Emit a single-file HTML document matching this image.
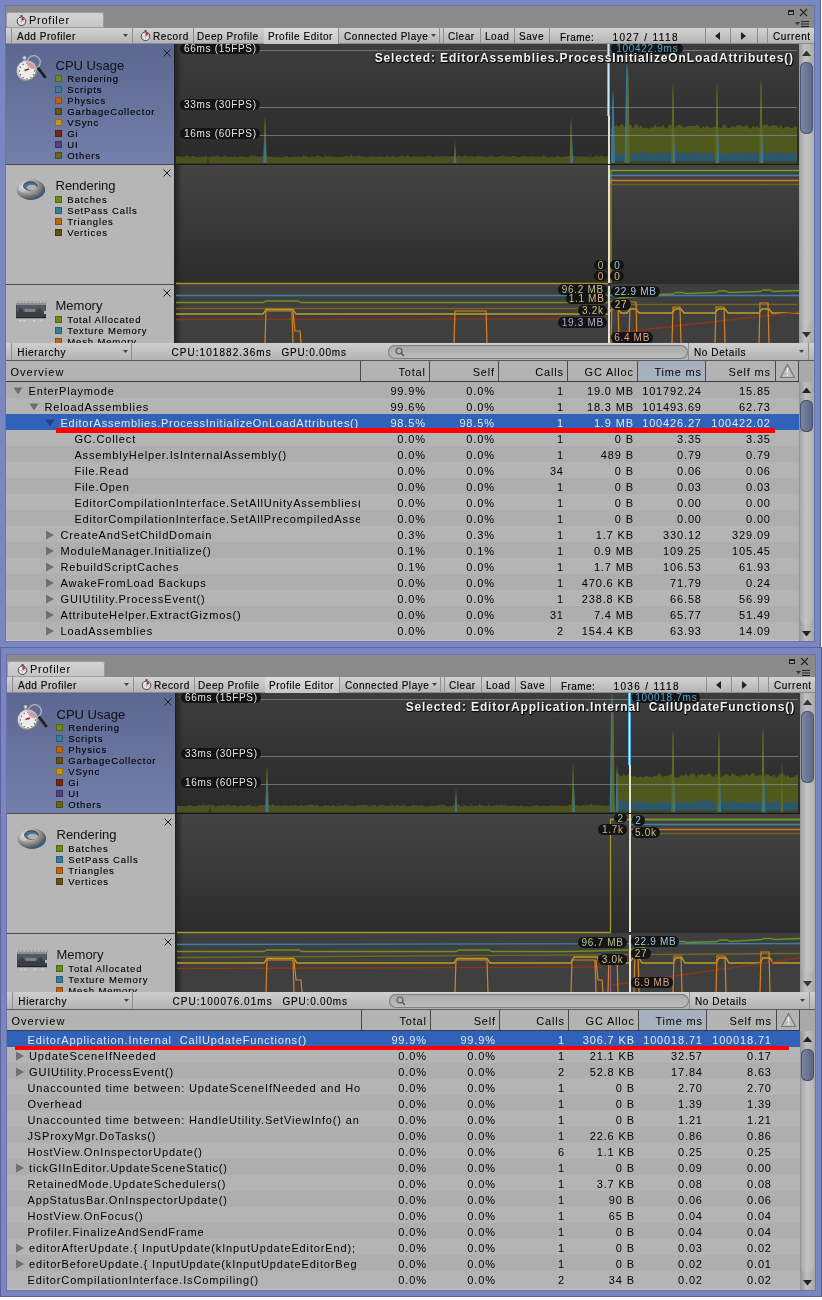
<!DOCTYPE html>
<html><head><meta charset="utf-8"><style>
html,body{margin:0;padding:0;width:822px;height:1300px;overflow:hidden;background:#fff;position:relative}
body div, body span, body svg{position:absolute}
svg *{position:static}
.t{font-family:"Liberation Sans", sans-serif;white-space:pre;line-height:20px;height:20px}
.pill{font-family:"Liberation Sans", sans-serif;font-size:10px;background:#141414;border-radius:6px;text-align:center;white-space:pre;letter-spacing:0.7px;text-indent:0.7px}
.sel{color:#f2f2f2;font-weight:bold;text-shadow:1px 1px 0 #000,0 1px 1px #000}
</style></head><body><div id="root" style="left:0;top:0;width:822px;height:1300px;overflow:hidden;background:#fff;will-change:transform">
<div style="left:0px;top:0px;width:821px;height:648px;background:#7986c2"></div>
<div style="left:820px;top:0px;width:1px;height:648px;background:#5b6497"></div>
<div style="left:0px;top:647px;width:822px;height:650px;background:#7986c2"></div>
<div style="left:0px;top:647px;width:822px;height:1px;background:#5b6497"></div>
<div style="left:0px;top:647px;width:1px;height:650px;background:#5b6497"></div>
<div style="left:821px;top:647px;width:1px;height:650px;background:#5b6497"></div>
<div style="left:0px;top:1296px;width:822px;height:1px;background:#5b6497"></div>
<div style="left:5px;top:5px;width:810px;height:637px;background:#6a74aa"></div>
<div style="left:6px;top:6px;width:808px;height:635px;background:#b4b4b4"></div>
<div style="left:6px;top:6px;width:808px;height:22px;background:#8a8a8a"></div>
<div style="left:6px;top:12px;width:98px;height:16px;background:linear-gradient(#d4d4d4,#c4c4c4);border-radius:3px 3px 0 0;box-shadow:inset 0 0 0 1px #9c9c9c"></div>
<svg style="left:16px;top:15px" width="11" height="11" viewBox="0 0 11 11"><rect x="4.5" y="0" width="2" height="2" fill="#555"/><circle cx="5.5" cy="6.3" r="4.3" fill="#e8e8e8" stroke="#444" stroke-width="1"/><path d="M5.5 6.3V2.6A3.7 3.7 0 0 1 8.6 4.5z" fill="#d0202a"/><path d="M5.5 3v6.5M2.2 6.3h6.6" stroke="#aaa" stroke-width="0.6"/></svg>
<span class="t" style="left:29px;top:9.99px;font-size:11px;color:#000;letter-spacing:0.75px;font-weight:normal;">Profiler</span>
<div style="left:788px;top:10px;width:6px;height:5px;border:1px solid #222;border-top-width:2px;box-sizing:border-box;background:#9a9a9a"></div>
<svg style="left:799px;top:8px" width="9" height="9"><path d="M1 1L8 8M8 1L1 8" stroke="#222" stroke-width="1.1"/></svg>
<svg style="left:795px;top:20px" width="15" height="8"><path d="M0 2h5l-2.5 3z" fill="#333"/><path d="M6 1.5h8M6 4h8M6 6.5h8" stroke="#222" stroke-width="1"/></svg>
<div style="left:6px;top:28px;width:808px;height:16px;background:linear-gradient(#d3d3d3,#b3b3b3)"></div>
<div style="left:6px;top:43px;width:808px;height:1px;background:#8c8c8c"></div>
<div style="left:11px;top:28px;width:1px;height:16px;background:#8e8e8e"></div>
<div style="left:132px;top:28px;width:1px;height:16px;background:#8e8e8e"></div>
<div style="left:193px;top:28px;width:1px;height:16px;background:#8e8e8e"></div>
<div style="left:264px;top:28px;width:1px;height:16px;background:#8e8e8e"></div>
<div style="left:338px;top:28px;width:1px;height:16px;background:#8e8e8e"></div>
<div style="left:439px;top:28px;width:1px;height:16px;background:#8e8e8e"></div>
<div style="left:443px;top:28px;width:1px;height:16px;background:#8e8e8e"></div>
<div style="left:480px;top:28px;width:1px;height:16px;background:#8e8e8e"></div>
<div style="left:514px;top:28px;width:1px;height:16px;background:#8e8e8e"></div>
<div style="left:549px;top:28px;width:1px;height:16px;background:#8e8e8e"></div>
<div style="left:705px;top:28px;width:1px;height:16px;background:#8e8e8e"></div>
<div style="left:730px;top:28px;width:1px;height:16px;background:#8e8e8e"></div>
<div style="left:757px;top:28px;width:1px;height:16px;background:#8e8e8e"></div>
<div style="left:767px;top:28px;width:1px;height:16px;background:#8e8e8e"></div>
<div style="left:264px;top:28px;width:74px;height:16px;background:linear-gradient(#dedede,#c6c6c6)"></div>
<span class="t" style="left:17px;top:27.24px;font-size:10px;color:#000;letter-spacing:0.55px;font-weight:normal;-webkit-text-stroke:0.12px #000">Add Profiler</span>
<svg style="left:123px;top:34px" width="6" height="4"><path d="M0 0h5l-2.5 3z" fill="#444"/></svg>
<svg style="left:140px;top:30px" width="11" height="11" viewBox="0 0 11 11"><rect x="4.5" y="0" width="2" height="2" fill="#555"/><circle cx="5.5" cy="6.3" r="4.3" fill="#e8e8e8" stroke="#444" stroke-width="1"/><path d="M5.5 6.3V2.6A3.7 3.7 0 0 1 8.6 4.5z" fill="#d0202a"/><path d="M5.5 3v6.5M2.2 6.3h6.6" stroke="#aaa" stroke-width="0.6"/></svg>
<span class="t" style="left:153px;top:27.24px;font-size:10px;color:#000;letter-spacing:0.6px;font-weight:normal;-webkit-text-stroke:0.12px #000">Record</span>
<span class="t" style="left:197px;top:27.24px;font-size:10px;color:#000;letter-spacing:0.55px;font-weight:normal;-webkit-text-stroke:0.12px #000">Deep Profile</span>
<span class="t" style="left:268px;top:27.24px;font-size:10px;color:#000;letter-spacing:0.55px;font-weight:normal;-webkit-text-stroke:0.12px #000">Profile Editor</span>
<span class="t" style="left:344px;top:27.24px;font-size:10px;color:#000;letter-spacing:0.55px;font-weight:normal;-webkit-text-stroke:0.12px #000">Connected Playe</span>
<svg style="left:431px;top:34px" width="6" height="4"><path d="M0 0h5l-2.5 3z" fill="#444"/></svg>
<span class="t" style="left:448px;top:27.24px;font-size:10px;color:#000;letter-spacing:0.55px;font-weight:normal;-webkit-text-stroke:0.12px #000">Clear</span>
<span class="t" style="left:485px;top:27.24px;font-size:10px;color:#000;letter-spacing:0.55px;font-weight:normal;-webkit-text-stroke:0.12px #000">Load</span>
<span class="t" style="left:519px;top:27.24px;font-size:10px;color:#000;letter-spacing:0.55px;font-weight:normal;-webkit-text-stroke:0.12px #000">Save</span>
<span class="t" style="left:560px;top:27.74px;font-size:10px;color:#000;letter-spacing:0.4px;font-weight:normal;-webkit-text-stroke:0.12px #000">Frame:</span>
<span class="t" style="left:612.5px;top:27.74px;font-size:10px;color:#000;letter-spacing:1.36px;font-weight:normal;-webkit-text-stroke:0.12px #000">1027 / 1118</span>
<svg style="left:714px;top:31px" width="8" height="10"><path d="M6 1v8l-5-4z" fill="#222"/></svg>
<svg style="left:740px;top:31px" width="8" height="10"><path d="M1 1v8l5-4z" fill="#222"/></svg>
<span class="t" style="left:773px;top:27.24px;font-size:10px;color:#000;letter-spacing:0.63px;font-weight:normal;-webkit-text-stroke:0.12px #000">Current</span>
<div style="left:6px;top:44px;width:168px;height:120px;background:linear-gradient(#5b6790,#7380ab)"></div>
<div style="left:6px;top:164px;width:168px;height:1px;background:#4a4a4a"></div>
<div style="left:6px;top:165px;width:168px;height:119px;background:#b6b6b6"></div>
<div style="left:6px;top:284px;width:168px;height:1px;background:#4a4a4a"></div>
<div style="left:6px;top:285px;width:168px;height:58px;background:#b6b6b6"></div>
<svg style="left:163px;top:49px" width="8" height="8"><path d="M0.5 0.5L7.5 7.5M7.5 0.5L0.5 7.5" stroke="#222" stroke-width="1"/></svg>
<svg style="left:163px;top:169px" width="8" height="8"><path d="M0.5 0.5L7.5 7.5M7.5 0.5L0.5 7.5" stroke="#222" stroke-width="1"/></svg>
<svg style="left:163px;top:289px" width="8" height="8"><path d="M0.5 0.5L7.5 7.5M7.5 0.5L0.5 7.5" stroke="#222" stroke-width="1"/></svg>
<span class="t" style="left:55.5px;top:55.50px;font-size:13px;color:#111;letter-spacing:0px;font-weight:normal;">CPU Usage</span>
<div style="left:55px;top:75px;width:7px;height:7px;background:#6c8a18;box-shadow:inset 0 0 0 1px rgba(0,0,0,0.25)"></div>
<span class="t" style="left:67.3px;top:69.01px;font-size:9.5px;color:#000;letter-spacing:0.85px;font-weight:normal;-webkit-text-stroke:0.12px #000">Rendering</span>
<div style="left:55px;top:86px;width:7px;height:7px;background:#347f98;box-shadow:inset 0 0 0 1px rgba(0,0,0,0.25)"></div>
<span class="t" style="left:67.3px;top:80.01px;font-size:9.5px;color:#000;letter-spacing:0.85px;font-weight:normal;-webkit-text-stroke:0.12px #000">Scripts</span>
<div style="left:55px;top:97px;width:7px;height:7px;background:#bd6612;box-shadow:inset 0 0 0 1px rgba(0,0,0,0.25)"></div>
<span class="t" style="left:67.3px;top:91.01px;font-size:9.5px;color:#000;letter-spacing:0.85px;font-weight:normal;-webkit-text-stroke:0.12px #000">Physics</span>
<div style="left:55px;top:108px;width:7px;height:7px;background:#625312;box-shadow:inset 0 0 0 1px rgba(0,0,0,0.25)"></div>
<span class="t" style="left:67.3px;top:102.01px;font-size:9.5px;color:#000;letter-spacing:0.85px;font-weight:normal;-webkit-text-stroke:0.12px #000">GarbageCollector</span>
<div style="left:55px;top:119px;width:7px;height:7px;background:#c49612;box-shadow:inset 0 0 0 1px rgba(0,0,0,0.25)"></div>
<span class="t" style="left:67.3px;top:113.01px;font-size:9.5px;color:#000;letter-spacing:0.85px;font-weight:normal;-webkit-text-stroke:0.12px #000">VSync</span>
<div style="left:55px;top:130px;width:7px;height:7px;background:#7c260e;box-shadow:inset 0 0 0 1px rgba(0,0,0,0.25)"></div>
<span class="t" style="left:67.3px;top:124.01px;font-size:9.5px;color:#000;letter-spacing:0.85px;font-weight:normal;-webkit-text-stroke:0.12px #000">Gi</span>
<div style="left:55px;top:141px;width:7px;height:7px;background:#55427f;box-shadow:inset 0 0 0 1px rgba(0,0,0,0.25)"></div>
<span class="t" style="left:67.3px;top:135.01px;font-size:9.5px;color:#000;letter-spacing:0.85px;font-weight:normal;-webkit-text-stroke:0.12px #000">UI</span>
<div style="left:55px;top:152px;width:7px;height:7px;background:#66661e;box-shadow:inset 0 0 0 1px rgba(0,0,0,0.25)"></div>
<span class="t" style="left:67.3px;top:146.01px;font-size:9.5px;color:#000;letter-spacing:0.85px;font-weight:normal;-webkit-text-stroke:0.12px #000">Others</span>
<svg style="left:10px;top:50px" width="40" height="40" viewBox="0 0 40 40"><defs><clipPath id="cb1050"><circle cx="17" cy="21" r="9"/></clipPath><radialGradient id="rim1050" cx="35%" cy="30%" r="75%"><stop offset="0" stop-color="#f4f4f4"/><stop offset="0.7" stop-color="#b8b8b8"/><stop offset="1" stop-color="#6a6a6a"/></radialGradient></defs><rect x="13.5" y="8" width="2" height="4" fill="#aaa"/><circle cx="14.5" cy="7.8" r="1.8" fill="#d8d8d8" stroke="#888" stroke-width="0.6"/><circle cx="17" cy="21" r="10.5" fill="url(#rim1050)"/><circle cx="17" cy="21" r="8.6" fill="#ececec"/><circle cx="24.60" cy="21.00" r="0.7" fill="#555"/><circle cx="23.58" cy="24.80" r="0.7" fill="#555"/><circle cx="20.80" cy="27.58" r="0.7" fill="#555"/><circle cx="17.00" cy="28.60" r="0.7" fill="#555"/><circle cx="13.20" cy="27.58" r="0.7" fill="#555"/><circle cx="10.42" cy="24.80" r="0.7" fill="#555"/><circle cx="9.40" cy="21.00" r="0.7" fill="#555"/><circle cx="10.42" cy="17.20" r="0.7" fill="#555"/><circle cx="13.20" cy="14.42" r="0.7" fill="#555"/><circle cx="17.00" cy="13.40" r="0.7" fill="#555"/><circle cx="20.80" cy="14.42" r="0.7" fill="#555"/><circle cx="23.58" cy="17.20" r="0.7" fill="#555"/><circle cx="23.8" cy="12.2" r="6.2" fill="#e08c8c" clip-path="url(#cb1050)" opacity="0.9"/><circle cx="23.8" cy="12.2" r="6.5" fill="none" stroke="#b4b4b4" stroke-width="1.3"/><path d="M14.5 20.5L19 19" stroke="#b81818" stroke-width="1.4"/><path d="M28.5 18.5L35 27" stroke="#1e1e1e" stroke-width="2.8" stroke-linecap="round"/></svg>
<span class="t" style="left:55.5px;top:176.20px;font-size:13px;color:#111;letter-spacing:0px;font-weight:normal;">Rendering</span>
<div style="left:55px;top:195.5px;width:7px;height:7px;background:#6c8a18;box-shadow:inset 0 0 0 1px rgba(0,0,0,0.25)"></div>
<span class="t" style="left:67.3px;top:189.51px;font-size:9.5px;color:#000;letter-spacing:0.85px;font-weight:normal;-webkit-text-stroke:0.12px #000">Batches</span>
<div style="left:55px;top:206.5px;width:7px;height:7px;background:#347f98;box-shadow:inset 0 0 0 1px rgba(0,0,0,0.25)"></div>
<span class="t" style="left:67.3px;top:200.51px;font-size:9.5px;color:#000;letter-spacing:0.85px;font-weight:normal;-webkit-text-stroke:0.12px #000">SetPass Calls</span>
<div style="left:55px;top:217.5px;width:7px;height:7px;background:#bd6612;box-shadow:inset 0 0 0 1px rgba(0,0,0,0.25)"></div>
<span class="t" style="left:67.3px;top:211.51px;font-size:9.5px;color:#000;letter-spacing:0.85px;font-weight:normal;-webkit-text-stroke:0.12px #000">Triangles</span>
<div style="left:55px;top:228.5px;width:7px;height:7px;background:#625312;box-shadow:inset 0 0 0 1px rgba(0,0,0,0.25)"></div>
<span class="t" style="left:67.3px;top:222.51px;font-size:9.5px;color:#000;letter-spacing:0.85px;font-weight:normal;-webkit-text-stroke:0.12px #000">Vertices</span>
<svg style="left:10px;top:170px" width="40" height="40" viewBox="0 0 40 40"><defs><radialGradient id="tg10170" cx="35%" cy="30%" r="80%"><stop offset="0" stop-color="#e6e6e6"/><stop offset="0.45" stop-color="#a4a4a4"/><stop offset="0.8" stop-color="#5e5e5e"/><stop offset="1" stop-color="#3a3a3a"/></radialGradient><clipPath id="tc10170"><ellipse cx="20.8" cy="19.5" rx="14.2" ry="10.2"/></clipPath></defs><ellipse cx="20.8" cy="19.5" rx="14.2" ry="10.2" fill="url(#tg10170)"/><path d="M16 30.5 Q31 30 35.5 18" stroke="#37607f" stroke-width="2.6" fill="none" clip-path="url(#tc10170)"/><ellipse cx="12.5" cy="18.5" rx="4" ry="3.5" fill="#fff" opacity="0.25"/><ellipse cx="20.3" cy="16" rx="7.2" ry="4.7" fill="#262626" opacity="0.85"/><ellipse cx="20.3" cy="16.2" rx="6.4" ry="4" fill="#456f94"/><ellipse cx="21.8" cy="17.6" rx="5.2" ry="2.8" fill="#b2b2b2"/></svg>
<span class="t" style="left:55.5px;top:296.10px;font-size:13px;color:#111;letter-spacing:0px;font-weight:normal;">Memory</span>
<div style="left:55px;top:316px;width:7px;height:7px;background:#6c8a18;box-shadow:inset 0 0 0 1px rgba(0,0,0,0.25)"></div>
<span class="t" style="left:67.3px;top:310.01px;font-size:9.5px;color:#000;letter-spacing:0.85px;font-weight:normal;-webkit-text-stroke:0.12px #000">Total Allocated</span>
<div style="left:55px;top:327px;width:7px;height:7px;background:#347f98;box-shadow:inset 0 0 0 1px rgba(0,0,0,0.25)"></div>
<span class="t" style="left:67.3px;top:321.01px;font-size:9.5px;color:#000;letter-spacing:0.85px;font-weight:normal;-webkit-text-stroke:0.12px #000">Texture Memory</span>
<div style="left:55px;top:338px;width:7px;height:7px;background:#bd6612;box-shadow:inset 0 0 0 1px rgba(0,0,0,0.25)"></div>
<span class="t" style="left:67.3px;top:332.01px;font-size:9.5px;color:#000;letter-spacing:0.85px;font-weight:normal;-webkit-text-stroke:0.12px #000">Mesh Memory</span>
<svg style="left:10px;top:290px" width="40" height="40" viewBox="0 0 40 40"><rect x="7.20" y="11" width="1.4" height="2.5" fill="#9a9a9a"/><rect x="10.75" y="11" width="1.4" height="2.5" fill="#9a9a9a"/><rect x="14.30" y="11" width="1.4" height="2.5" fill="#9a9a9a"/><rect x="17.85" y="11" width="1.4" height="2.5" fill="#9a9a9a"/><rect x="21.40" y="11" width="1.4" height="2.5" fill="#9a9a9a"/><rect x="24.95" y="11" width="1.4" height="2.5" fill="#9a9a9a"/><rect x="28.50" y="11" width="1.4" height="2.5" fill="#9a9a9a"/><rect x="32.05" y="11" width="1.4" height="2.5" fill="#9a9a9a"/><rect x="35.60" y="11" width="1.4" height="2.5" fill="#9a9a9a"/><circle cx="10.3" cy="30.5" r="1" fill="#d8d8d8"/><circle cx="14.3" cy="30.5" r="1" fill="#d8d8d8"/><circle cx="24.2" cy="30.5" r="1" fill="#d8d8d8"/><circle cx="31.5" cy="30.5" r="1" fill="#d8d8d8"/><rect x="6" y="13" width="30" height="15" fill="#3a3f46"/><rect x="6" y="13" width="30" height="2" fill="#8a8f94"/><rect x="6.5" y="15" width="29" height="6.5" fill="#555a61"/><circle cx="10.5" cy="20.5" r="2.3" fill="#3a3f46"/><circle cx="29.5" cy="20.5" r="2.3" fill="#3a3f46"/><rect x="14.5" y="19" width="10.5" height="3" fill="#9aa0a8" opacity="0.6"/><rect x="6" y="27" width="30" height="1.2" fill="#1e2226"/><rect x="34" y="21" width="2" height="3" fill="#b9b9b9"/></svg>
<div style="left:174px;top:44px;width:625px;height:299px;overflow:hidden;background:#2a2a2a">
<svg width="625" height="299" style="left:0;top:0"><g transform="translate(-174,-44)">
<defs><linearGradient id="gc0" x1="0" y1="0" x2="0" y2="1"><stop offset="0" stop-color="#3d3d3d"/><stop offset="1" stop-color="#2a2a2a"/></linearGradient><linearGradient id="gr0" x1="0" y1="0" x2="0" y2="1"><stop offset="0" stop-color="#444"/><stop offset="1" stop-color="#2c2c2c"/></linearGradient><linearGradient id="gl0" x1="0" y1="0" x2="1" y2="0"><stop offset="0" stop-color="#222"/><stop offset="1" stop-color="#222" stop-opacity="0"/></linearGradient></defs>
<rect x="174" y="44" width="625" height="120" fill="url(#gc0)"/>
<rect x="174" y="164" width="625" height="1" fill="#181818"/>
<rect x="174" y="165" width="625" height="119" fill="url(#gr0)"/>
<rect x="174" y="284" width="625" height="59" fill="#3f3f3f"/>
<rect x="174" y="44" width="8" height="299" fill="url(#gl0)"/>
<rect x="174" y="44" width="1" height="299" fill="#1e1e1e"/>
<polygon points="176,156.0 178,156.6 180,156.3 182,156.7 184,156.7 186,155.7 188,155.6 190,157.1 192,156.1 194,156.0 196,157.4 198,156.4 200,157.1 202,156.5 204,156.8 206,155.9 208,156.7 210,157.2 212,156.5 214,156.9 216,156.8 218,155.7 220,157.0 222,156.7 224,156.1 226,155.7 228,157.2 230,156.5 232,156.9 234,157.2 236,156.9 238,157.3 240,156.3 242,157.0 244,156.4 246,157.3 248,157.2 250,155.8 252,155.8 254,156.0 256,157.3 258,156.4 260,156.7 262,156.1 264,156.5 266,156.3 268,156.2 270,156.7 272,156.7 274,157.2 276,156.8 278,157.3 280,157.1 282,157.4 284,156.8 286,155.9 288,157.1 290,157.3 292,157.2 294,156.6 296,156.9 298,156.0 300,157.1 302,156.6 304,156.1 306,155.7 308,157.1 310,157.4 312,155.8 314,157.0 316,156.3 318,155.9 320,156.1 322,157.0 324,157.2 326,155.7 328,156.7 330,155.7 332,156.9 334,156.2 336,157.2 338,157.4 340,156.5 342,157.4 344,156.2 346,155.7 348,156.7 350,155.7 352,156.0 354,156.3 356,156.7 358,155.9 360,155.7 362,157.2 364,156.2 366,157.3 368,157.2 370,156.3 372,156.4 374,156.5 376,156.8 378,156.7 380,156.6 382,156.7 384,157.3 386,156.5 388,156.4 390,156.9 392,156.0 394,156.1 396,157.4 398,156.5 400,156.6 402,155.6 404,156.3 406,156.6 408,155.6 410,156.7 412,156.7 414,155.7 416,156.7 418,156.4 420,156.8 422,156.2 424,156.9 426,156.9 428,155.6 430,155.7 432,156.8 434,157.3 436,156.1 438,156.4 440,156.7 442,156.2 444,156.3 446,156.2 448,156.3 450,156.7 452,156.1 454,156.3 456,157.0 458,155.6 460,156.6 462,156.9 464,156.2 466,156.0 468,157.0 470,156.0 472,155.9 474,156.4 476,156.9 478,155.8 480,156.2 482,156.2 484,157.1 486,156.4 488,157.1 490,155.9 492,156.2 494,156.8 496,157.2 498,156.4 500,156.0 502,155.8 504,156.6 506,155.9 508,157.1 510,157.1 512,155.9 514,156.1 516,157.1 518,156.8 520,157.1 522,156.2 524,155.8 526,156.1 528,157.0 530,156.1 532,156.2 534,156.4 536,156.4 538,156.3 540,157.3 542,155.9 544,155.6 546,157.3 548,157.2 550,157.4 552,156.4 554,157.3 556,157.3 558,156.0 560,156.9 562,157.1 564,156.8 566,156.5 568,156.1 570,156.2 572,156.0 574,155.7 576,156.7 578,156.1 580,157.1 582,155.7 584,157.2 586,156.8 588,157.3 590,157.2 592,157.2 594,156.6 596,155.6 598,156.9 600,155.9 602,156.1 604,156.8 606,156.5 608,156.3 610,157.3 611,163.5 176,163.5" fill="#4c4f1f"/>
<rect x="503" y="154.7" width="1" height="1" fill="#3a7896" opacity="0.5"/>
<rect x="254" y="155.0" width="1" height="1" fill="#3a7896" opacity="0.5"/>
<rect x="466" y="155.5" width="1" height="1" fill="#3a7896" opacity="0.5"/>
<rect x="590" y="154.6" width="1" height="1" fill="#3a7896" opacity="0.5"/>
<rect x="303" y="154.9" width="1" height="1" fill="#3a7896" opacity="0.5"/>
<rect x="463" y="156.3" width="1" height="1" fill="#3a7896" opacity="0.5"/>
<rect x="251" y="154.8" width="1" height="1" fill="#3a7896" opacity="0.5"/>
<rect x="595" y="155.0" width="1" height="1" fill="#3a7896" opacity="0.5"/>
<rect x="602" y="154.8" width="1" height="1" fill="#3a7896" opacity="0.5"/>
<rect x="193" y="155.5" width="1" height="1" fill="#3a7896" opacity="0.5"/>
<rect x="482" y="156.2" width="1" height="1" fill="#3a7896" opacity="0.5"/>
<rect x="215" y="156.0" width="1" height="1" fill="#3a7896" opacity="0.5"/>
<rect x="317" y="155.0" width="1" height="1" fill="#3a7896" opacity="0.5"/>
<rect x="459" y="155.5" width="1" height="1" fill="#3a7896" opacity="0.5"/>
<rect x="216" y="155.4" width="1" height="1" fill="#3a7896" opacity="0.5"/>
<rect x="587" y="156.1" width="1" height="1" fill="#3a7896" opacity="0.5"/>
<rect x="218" y="156.1" width="1" height="1" fill="#3a7896" opacity="0.5"/>
<rect x="213" y="154.7" width="1" height="1" fill="#3a7896" opacity="0.5"/>
<rect x="225" y="155.5" width="1" height="1" fill="#3a7896" opacity="0.5"/>
<rect x="206" y="156.2" width="1" height="1" fill="#3a7896" opacity="0.5"/>
<rect x="234" y="155.5" width="1" height="1" fill="#3a7896" opacity="0.5"/>
<rect x="440" y="155.1" width="1" height="1" fill="#3a7896" opacity="0.5"/>
<rect x="351" y="154.6" width="1" height="1" fill="#3a7896" opacity="0.5"/>
<rect x="387" y="155.8" width="1" height="1" fill="#3a7896" opacity="0.5"/>
<rect x="490" y="155.1" width="1" height="1" fill="#3a7896" opacity="0.5"/>
<rect x="325" y="154.9" width="1" height="1" fill="#3a7896" opacity="0.5"/>
<rect x="358" y="155.4" width="1" height="1" fill="#3a7896" opacity="0.5"/>
<rect x="255" y="155.6" width="1" height="1" fill="#3a7896" opacity="0.5"/>
<rect x="556" y="155.9" width="1" height="1" fill="#3a7896" opacity="0.5"/>
<rect x="597" y="154.7" width="1" height="1" fill="#3a7896" opacity="0.5"/>
<rect x="281" y="154.6" width="1" height="1" fill="#3a7896" opacity="0.5"/>
<rect x="425" y="155.7" width="1" height="1" fill="#3a7896" opacity="0.5"/>
<rect x="590" y="155.6" width="1" height="1" fill="#3a7896" opacity="0.5"/>
<rect x="515" y="156.1" width="1" height="1" fill="#3a7896" opacity="0.5"/>
<rect x="508" y="156.3" width="1" height="1" fill="#3a7896" opacity="0.5"/>
<rect x="217" y="155.2" width="1" height="1" fill="#3a7896" opacity="0.5"/>
<rect x="444" y="156.0" width="1" height="1" fill="#3a7896" opacity="0.5"/>
<rect x="351" y="155.3" width="1" height="1" fill="#3a7896" opacity="0.5"/>
<rect x="545" y="155.3" width="1" height="1" fill="#3a7896" opacity="0.5"/>
<rect x="199" y="155.0" width="1" height="1" fill="#3a7896" opacity="0.5"/>
<rect x="464" y="155.0" width="1" height="1" fill="#3a7896" opacity="0.5"/>
<rect x="492" y="154.6" width="1" height="1" fill="#3a7896" opacity="0.5"/>
<rect x="407" y="154.9" width="1" height="1" fill="#3a7896" opacity="0.5"/>
<rect x="256" y="156.3" width="1" height="1" fill="#3a7896" opacity="0.5"/>
<rect x="356" y="155.2" width="1" height="1" fill="#3a7896" opacity="0.5"/>
<rect x="476" y="156.1" width="1" height="1" fill="#3a7896" opacity="0.5"/>
<rect x="324" y="154.7" width="1" height="1" fill="#3a7896" opacity="0.5"/>
<rect x="543" y="154.7" width="1" height="1" fill="#3a7896" opacity="0.5"/>
<rect x="606" y="156.0" width="1" height="1" fill="#3a7896" opacity="0.5"/>
<rect x="461" y="156.1" width="1" height="1" fill="#3a7896" opacity="0.5"/>
<polygon points="611,127.3 613,127.7 615,126.8 617,124.5 619,126.9 621,124.0 623,124.7 625,127.9 627,124.2 629,124.5 631,124.5 633,128.4 635,124.9 637,124.1 639,128.2 641,124.6 643,128.2 645,127.4 647,128.2 649,128.8 651,126.9 653,128.0 655,124.2 657,127.8 659,126.6 661,127.6 663,124.5 665,127.7 667,128.7 669,124.3 671,125.6 673,126.8 675,128.1 677,125.2 679,124.9 681,125.2 683,127.1 685,127.8 687,126.0 689,125.8 691,126.0 693,125.8 695,126.1 697,124.4 699,126.5 701,128.9 703,126.1 705,127.7 707,124.8 709,127.5 711,127.8 713,127.4 715,126.6 717,126.4 719,127.2 721,128.5 723,124.7 725,124.5 727,127.7 729,128.6 731,126.6 733,126.2 735,127.6 737,124.9 739,125.3 741,125.0 743,126.9 745,125.6 747,125.2 749,127.5 751,128.8 753,125.5 755,127.5 757,126.1 759,128.3 761,126.9 763,125.3 765,125.1 767,124.1 769,126.4 771,125.9 773,124.9 775,125.8 777,125.6 779,127.9 781,124.7 783,129.0 785,126.4 787,127.0 789,126.3 791,128.2 793,128.1 795,126.8 797,126.4 797,163.5 611,163.5" fill="#4f581d"/>
<polygon points="614,153.8 616,154.3 618,152.6 620,153.8 622,154.7 624,152.9 626,152.0 628,152.0 630,153.8 632,153.6 634,154.7 636,154.3 638,152.1 640,151.9 642,152.1 644,151.9 646,153.7 648,154.3 650,154.4 652,152.1 654,154.3 656,152.3 658,152.7 660,153.8 662,151.5 664,151.5 666,154.2 668,152.3 670,152.5 672,153.3 674,153.6 676,151.2 678,152.4 680,152.8 682,152.9 684,152.0 686,153.3 688,154.6 690,152.6 692,153.2 694,151.6 696,152.2 698,153.6 700,151.6 702,154.4 704,154.5 706,151.5 708,154.6 710,152.5 712,154.0 714,153.9 716,152.3 718,153.6 720,153.6 722,154.1 724,152.2 726,153.9 728,154.7 730,153.6 732,153.1 734,151.6 736,153.0 738,152.5 740,153.8 742,153.6 744,153.2 746,151.9 748,153.5 750,153.5 752,151.8 754,154.4 756,153.6 758,151.6 760,154.6 762,151.7 764,152.4 766,153.8 768,153.4 770,153.2 772,153.5 774,152.8 776,152.3 778,151.8 780,151.4 782,153.8 784,153.9 786,153.2 788,153.9 790,152.5 792,152.2 794,152.6 796,154.3 797,162 614,162" fill="#2b566c"/>
<rect x="611" y="161.5" width="186" height="2" fill="#3d4520"/>
<polygon points="206.8,163 207.6,160 208,152 208.4,160 209.2,163" fill="#2c2c2c"/>
<polygon points="263.1,163 264.4,124 265,116 265.6,124 266.9,163" fill="#5e6a20"/>
<polygon points="263.5,163 264.5,140 265,132 265.5,140 266.5,163" fill="#36769a"/>
<polygon points="453.5,163 454.5,148 455,140 455.5,148 456.5,163" fill="#5e6a20"/>
<polygon points="453.8,163 454.6,156 455,148 455.4,156 456.2,163" fill="#36769a"/>
<polygon points="569.5,163 570.5,124 571,116 571.5,124 572.5,163" fill="#5e6a20"/>
<polygon points="570.8,163 571.6,143 572,135 572.4,143 573.2,163" fill="#36769a"/>
<polygon points="610.9,163 612.3,98 613,90 613.7,98 615.1,163" fill="#36769a"/>
<polygon points="624.6,163 626.2,70 627,62 627.8,70 629.4,163" fill="#36769a"/>
<polygon points="626.2,163 627.4,78 628,70 628.6,78 629.8,163" fill="#5e6a20"/>
<polygon points="671.2,163 672.4,91 673,83 673.6,91 674.8,163" fill="#5e6a20"/>
<polygon points="672.8,163 673.6,138 674,130 674.4,138 675.2,163" fill="#36769a"/>
<polygon points="715.2,163 716.4,91 717,83 717.6,91 718.8,163" fill="#5e6a20"/>
<polygon points="716.8,163 717.6,138 718,130 718.4,138 719.2,163" fill="#36769a"/>
<polygon points="759.2,163 760.4,87 761,79 761.6,87 762.8,163" fill="#5e6a20"/>
<polygon points="760.5,163 761.5,138 762,130 762.5,138 763.5,163" fill="#36769a"/>
<line x1="259" x2="797" y1="50.5" y2="50.5" stroke="#9a9a9a" stroke-width="1" opacity="0.6"/>
<line x1="259" x2="797" y1="107.5" y2="107.5" stroke="#9a9a9a" stroke-width="1" opacity="0.6"/>
<line x1="259" x2="797" y1="135.5" y2="135.5" stroke="#9a9a9a" stroke-width="1" opacity="0.6"/>
<line x1="176" x2="608" y1="283.5" y2="283.5" stroke="#a39428" stroke-width="1.3"/>
<polyline points="611,283 611,170.5 799,170.5" stroke="#7a9a1e" fill="none" stroke-width="1.3"/>
<polyline points="611,283 611,175.5 799,175.5" stroke="#3a86a5" fill="none" stroke-width="1.3"/>
<polyline points="611,283 611,180.5 799,180.5" stroke="#d07a18" fill="none" stroke-width="1.3"/>
<polyline points="611,283 611,184.5 799,184.5" stroke="#6f6418" fill="none" stroke-width="1.3"/>
<polyline points="176,295.5 799,295.5" stroke="#3a80a0" fill="none" stroke-width="1.3"/>
<polyline points="176,302.5 263,302.5 266,301 298,301 301,302.5 608,302.5 620,298 660,294.5 673,294 676,292.5 683,292.5 686,293.5 716,292.5 719,291 726,291 729,292.5 760,291.5 763,290 770,290 773,291.5 799,290.5" stroke="#6f8f1e" fill="none" stroke-width="1.3"/>
<polyline points="176,308.5 608,308.5 612,304.5 797,304.5" stroke="#7a6a1c" fill="none" stroke-width="1.3" opacity="0.9"/>
<polyline points="176,314 263,314 266,309.5 293,309.5 296,314 608,314 612,309 618,309 621,313 627,313 630,309 636,309 639,313 672,313 675,309 681,309 684,313 715,313 718,309 725,309 728,313 759,313 762,309 769,309 772,313 799,313" stroke="#c0a020" fill="none" stroke-width="1.3"/>
<polyline points="176,319.5 608,319" stroke="#8e3614" fill="none" stroke-width="1.3"/>
<polyline points="614,333 799,312" stroke="#8e3614" fill="none" stroke-width="1.3"/>
<polyline points="265,343 266,311 292,311 293,343" stroke="#d8841c" fill="none" stroke-width="1.2"/>
<polyline points="454,343 455,311 486,311 487,343" stroke="#d8841c" fill="none" stroke-width="1.2"/>
<polyline points="611,343 612,302 618,302 619,343" stroke="#d8841c" fill="none" stroke-width="1.2"/>
<polyline points="629,343 630,302 636,302 637,343" stroke="#d8841c" fill="none" stroke-width="1.2"/>
<polyline points="672,343 673,307 680,307 681,343" stroke="#d8841c" fill="none" stroke-width="1.2"/>
<polyline points="715,343 716,307 724,307 725,343" stroke="#d8841c" fill="none" stroke-width="1.2"/>
<polyline points="759,343 760,303 768,303 769,343" stroke="#d8841c" fill="none" stroke-width="1.2"/>
<polyline points="293,311 295,331 300,331 301,343" stroke="#d8841c" fill="none" stroke-width="1.2"/>
<rect x="608" y="44" width="2" height="120" fill="#e6e2d2"/>
<rect x="607" y="44" width="3" height="72" fill="#5ab0e0"/>
<rect x="608" y="44" width="1" height="72" fill="#c8ecff"/>
<rect x="608" y="165" width="2" height="118" fill="#e6e2d2"/>
<rect x="608" y="286" width="2" height="57" fill="#e6e2d2"/>
</g></svg><div class="pill" style="left:6px;top:-1.5px;width:80px;height:11.5px;line-height:12.5px;color:#e4e4e4">66ms (15FPS)</div><div class="pill" style="left:6px;top:55.2px;width:80px;height:11.200000000000003px;line-height:12.200000000000003px;color:#e4e4e4">33ms (30FPS)</div><div class="pill" style="left:6px;top:84.19999999999999px;width:80px;height:11.200000000000017px;line-height:12.200000000000017px;color:#e4e4e4">16ms (60FPS)</div><div class="pill" style="left:437px;top:-1px;width:72px;height:11px;line-height:12px;color:#56a2d0">100422.9ms</div><div class="pill" style="left:420px;top:215.5px;width:13px;height:10.5px;line-height:11.5px;color:#b4bc8c">0</div><div class="pill" style="left:420px;top:226.5px;width:13px;height:10.5px;line-height:11.5px;color:#d8ac84">0</div><div class="pill" style="left:436px;top:215.5px;width:14px;height:10.5px;line-height:11.5px;color:#9cc4dc">0</div><div class="pill" style="left:436px;top:226.5px;width:14px;height:10.5px;line-height:11.5px;color:#c8c28c">0</div><div class="pill" style="left:384px;top:239.5px;width:49px;height:11.0px;line-height:12.0px;color:#b8c490">96.2 MB</div><div class="pill" style="left:391.5px;top:248.5px;width:41.5px;height:11.0px;line-height:12.0px;color:#dcb888">1.1 MB</div><div class="pill" style="left:404px;top:260.5px;width:29px;height:11.0px;line-height:12.0px;color:#d0c48a">3.2k</div><div class="pill" style="left:384px;top:272.5px;width:49px;height:11.0px;line-height:12.0px;color:#b4acd0">19.3 MB</div><div class="pill" style="left:437px;top:242px;width:48.5px;height:11px;line-height:12px;color:#a0c8e0">22.9 MB</div><div class="pill" style="left:437px;top:254.5px;width:19.5px;height:11.0px;line-height:12.0px;color:#d0c48a">27</div><div class="pill" style="left:437px;top:288px;width:41.5px;height:11px;line-height:12px;color:#d8a48c">6.4 MB</div><span class="t sel" style="left:20px;width:600px;text-align:right;top:3.99px;font-size:12px;letter-spacing:0.87px">Selected: EditorAssemblies.ProcessInitializeOnLoadAttributes()</span>
</div>
<div style="left:799px;top:44px;width:15px;height:299px;background:linear-gradient(90deg,#9a9a9a,#c2c2c2 40%,#a8a8a8)"></div>
<svg style="left:801px;top:50px" width="11" height="7"><path d="M5.5 0.5L10 6H1z" fill="#333"/></svg>
<svg style="left:801px;top:331px" width="11" height="7"><path d="M5.5 6.5L10 1H1z" fill="#333"/></svg>
<div style="left:800px;top:134px;width:13px;height:190px;background:linear-gradient(90deg,#a8a8a8,#c4c4c4 45%,#b4b4b4);border-radius:0 0 6px 6px"></div>
<div style="left:800px;top:62px;width:13px;height:72px;background:linear-gradient(90deg,#7e8aa5,#5a6888);border-radius:6px;box-shadow:inset 0 0 0 1px #4a5670"></div>
<div style="left:6px;top:343px;width:808px;height:18px;background:linear-gradient(#cfcfcf,#b1b1b1)"></div>
<div style="left:6px;top:360px;width:808px;height:1px;background:#5a5a5a"></div>
<div style="left:11px;top:343px;width:1px;height:17px;background:#8e8e8e"></div>
<div style="left:131px;top:343px;width:1px;height:17px;background:#8e8e8e"></div>
<span class="t" style="left:17.3px;top:343.14px;font-size:10px;color:#000;letter-spacing:0.68px;font-weight:normal;-webkit-text-stroke:0.12px #000">Hierarchy</span>
<svg style="left:123px;top:350px" width="6" height="4"><path d="M0 0h5l-2.5 3z" fill="#444"/></svg>
<span class="t" style="left:171.5px;top:343.14px;font-size:10px;color:#000;letter-spacing:1.05px;font-weight:normal;-webkit-text-stroke:0.12px #000">CPU:101882.36ms</span>
<span class="t" style="left:281.5px;top:343.14px;font-size:10px;color:#000;letter-spacing:0.8px;font-weight:normal;-webkit-text-stroke:0.12px #000">GPU:0.00ms</span>
<div style="left:388px;top:345px;width:300px;height:14px;background:linear-gradient(#a9a9a9,#bdbdbd);border-radius:7px;box-shadow:inset 0 0 0 1px #7d7d7d"></div>
<svg style="left:395px;top:347px" width="10" height="10"><circle cx="4" cy="4" r="3" fill="none" stroke="#555" stroke-width="1.2"/><path d="M6 6L9 9" stroke="#555" stroke-width="1.4"/></svg>
<div style="left:688px;top:343px;width:1px;height:17px;background:#8e8e8e"></div>
<div style="left:808px;top:343px;width:1px;height:17px;background:#8e8e8e"></div>
<span class="t" style="left:694px;top:343.14px;font-size:10px;color:#000;letter-spacing:0.6px;font-weight:normal;-webkit-text-stroke:0.12px #000">No Details</span>
<svg style="left:799px;top:350px" width="6" height="4"><path d="M0 0h5l-2.5 3z" fill="#444"/></svg>
<div style="left:6px;top:361px;width:793px;height:20px;background:#b3b3b3"></div>
<div style="left:637px;top:361px;width:68px;height:20px;background:#a7b1bd"></div>
<div style="left:6px;top:381px;width:793px;height:1px;background:#3c3c3c"></div>
<div style="left:360px;top:361px;width:1px;height:20px;background:#4a4a4a"></div>
<div style="left:429px;top:361px;width:1px;height:20px;background:#4a4a4a"></div>
<div style="left:498px;top:361px;width:1px;height:20px;background:#4a4a4a"></div>
<div style="left:567px;top:361px;width:1px;height:20px;background:#4a4a4a"></div>
<div style="left:637px;top:361px;width:1px;height:20px;background:#4a4a4a"></div>
<div style="left:705px;top:361px;width:1px;height:20px;background:#4a4a4a"></div>
<div style="left:775px;top:361px;width:1px;height:20px;background:#4a4a4a"></div>
<div style="left:798px;top:361px;width:1px;height:20px;background:#4a4a4a"></div>
<span class="t" style="left:10.5px;top:362.19px;font-size:11px;color:#000;letter-spacing:1.0px;font-weight:normal;">Overview</span>
<span class="t" style="left:345.8px;width:80px;text-align:right;top:362.19px;font-size:11px;color:#000;letter-spacing:0.8px;font-weight:normal;">Total</span>
<span class="t" style="left:414.8px;width:80px;text-align:right;top:362.19px;font-size:11px;color:#000;letter-spacing:0.8px;font-weight:normal;">Self</span>
<span class="t" style="left:483.79999999999995px;width:80px;text-align:right;top:362.19px;font-size:11px;color:#000;letter-spacing:0.8px;font-weight:normal;">Calls</span>
<span class="t" style="left:553.8px;width:80px;text-align:right;top:362.19px;font-size:11px;color:#000;letter-spacing:0.8px;font-weight:normal;">GC Alloc</span>
<span class="t" style="left:621.8px;width:80px;text-align:right;top:362.19px;font-size:11px;color:#000;letter-spacing:0.8px;font-weight:normal;">Time ms</span>
<span class="t" style="left:690.8px;width:80px;text-align:right;top:362.19px;font-size:11px;color:#000;letter-spacing:0.8px;font-weight:normal;">Self ms</span>
<svg style="left:779px;top:363px" width="17" height="16"><path d="M8.5 1.5L15.5 14.5H1.5z" fill="#bdbdbd" stroke="#777" stroke-width="1.2" stroke-linejoin="round"/><path d="M8.5 5v5" stroke="#f2f2f2" stroke-width="1.5"/><circle cx="8.5" cy="12" r="0.9" fill="#f2f2f2"/></svg>
<div style="left:799px;top:361px;width:15px;height:21px;background:#a9a9a9"></div>
<div style="left:6px;top:382px;width:793px;height:16px;background:#aeaeae"></div>
<svg style="left:13px;top:387px" width="10" height="8"><path d="M0.5 0.5h9l-4.5 7z" fill="#6e6e6e"/></svg>
<div style="left:6px;top:382px;width:354px;height:16px;overflow:hidden">
<span class="t" style="left:22.5px;top:-1.01px;font-size:11px;color:#000;letter-spacing:0.85px">EnterPlaymode</span>
</div>
<span class="t" style="left:335.85px;width:90px;text-align:right;top:380.99px;font-size:11px;color:#000;letter-spacing:0.85px;font-weight:normal;">99.9%</span>
<span class="t" style="left:404.85px;width:90px;text-align:right;top:380.99px;font-size:11px;color:#000;letter-spacing:0.85px;font-weight:normal;">0.0%</span>
<span class="t" style="left:473.85px;width:90px;text-align:right;top:380.99px;font-size:11px;color:#000;letter-spacing:0.85px;font-weight:normal;">1</span>
<span class="t" style="left:543.85px;width:90px;text-align:right;top:380.99px;font-size:11px;color:#000;letter-spacing:0.85px;font-weight:normal;">19.0 MB</span>
<span class="t" style="left:611.85px;width:90px;text-align:right;top:380.99px;font-size:11px;color:#000;letter-spacing:0.85px;font-weight:normal;">101792.24</span>
<span class="t" style="left:680.85px;width:90px;text-align:right;top:380.99px;font-size:11px;color:#000;letter-spacing:0.85px;font-weight:normal;">15.85</span>
<div style="left:6px;top:398px;width:793px;height:16px;background:#b4b4b4"></div>
<svg style="left:29px;top:403px" width="10" height="8"><path d="M0.5 0.5h9l-4.5 7z" fill="#6e6e6e"/></svg>
<div style="left:6px;top:398px;width:354px;height:16px;overflow:hidden">
<span class="t" style="left:38.5px;top:-1.01px;font-size:11px;color:#000;letter-spacing:0.85px">ReloadAssemblies</span>
</div>
<span class="t" style="left:335.85px;width:90px;text-align:right;top:396.99px;font-size:11px;color:#000;letter-spacing:0.85px;font-weight:normal;">99.6%</span>
<span class="t" style="left:404.85px;width:90px;text-align:right;top:396.99px;font-size:11px;color:#000;letter-spacing:0.85px;font-weight:normal;">0.0%</span>
<span class="t" style="left:473.85px;width:90px;text-align:right;top:396.99px;font-size:11px;color:#000;letter-spacing:0.85px;font-weight:normal;">1</span>
<span class="t" style="left:543.85px;width:90px;text-align:right;top:396.99px;font-size:11px;color:#000;letter-spacing:0.85px;font-weight:normal;">18.3 MB</span>
<span class="t" style="left:611.85px;width:90px;text-align:right;top:396.99px;font-size:11px;color:#000;letter-spacing:0.85px;font-weight:normal;">101493.69</span>
<span class="t" style="left:680.85px;width:90px;text-align:right;top:396.99px;font-size:11px;color:#000;letter-spacing:0.85px;font-weight:normal;">62.73</span>
<div style="left:6px;top:414px;width:793px;height:16px;background:#2f62b8"></div>
<svg style="left:45px;top:419px" width="10" height="8"><path d="M0.5 0.5h9l-4.5 7z" fill="#23408a"/></svg>
<div style="left:6px;top:414px;width:354px;height:16px;overflow:hidden">
<span class="t" style="left:54.5px;top:-1.01px;font-size:11px;color:#e6e6e6;letter-spacing:0.73px">EditorAssemblies.ProcessInitializeOnLoadAttributes()</span>
</div>
<span class="t" style="left:335.85px;width:90px;text-align:right;top:412.99px;font-size:11px;color:#e6e6e6;letter-spacing:0.85px;font-weight:normal;">98.5%</span>
<span class="t" style="left:404.85px;width:90px;text-align:right;top:412.99px;font-size:11px;color:#e6e6e6;letter-spacing:0.85px;font-weight:normal;">98.5%</span>
<span class="t" style="left:473.85px;width:90px;text-align:right;top:412.99px;font-size:11px;color:#e6e6e6;letter-spacing:0.85px;font-weight:normal;">1</span>
<span class="t" style="left:543.85px;width:90px;text-align:right;top:412.99px;font-size:11px;color:#e6e6e6;letter-spacing:0.85px;font-weight:normal;">1.9 MB</span>
<span class="t" style="left:611.85px;width:90px;text-align:right;top:412.99px;font-size:11px;color:#e6e6e6;letter-spacing:0.85px;font-weight:normal;">100426.27</span>
<span class="t" style="left:680.85px;width:90px;text-align:right;top:412.99px;font-size:11px;color:#e6e6e6;letter-spacing:0.85px;font-weight:normal;">100422.02</span>
<div style="left:6px;top:430px;width:793px;height:16px;background:#b4b4b4"></div>
<div style="left:6px;top:430px;width:354px;height:16px;overflow:hidden">
<span class="t" style="left:68.4px;top:-1.01px;font-size:11px;color:#000;letter-spacing:0.85px">GC.Collect</span>
</div>
<span class="t" style="left:335.85px;width:90px;text-align:right;top:428.99px;font-size:11px;color:#000;letter-spacing:0.85px;font-weight:normal;">0.0%</span>
<span class="t" style="left:404.85px;width:90px;text-align:right;top:428.99px;font-size:11px;color:#000;letter-spacing:0.85px;font-weight:normal;">0.0%</span>
<span class="t" style="left:473.85px;width:90px;text-align:right;top:428.99px;font-size:11px;color:#000;letter-spacing:0.85px;font-weight:normal;">1</span>
<span class="t" style="left:543.85px;width:90px;text-align:right;top:428.99px;font-size:11px;color:#000;letter-spacing:0.85px;font-weight:normal;">0 B</span>
<span class="t" style="left:611.85px;width:90px;text-align:right;top:428.99px;font-size:11px;color:#000;letter-spacing:0.85px;font-weight:normal;">3.35</span>
<span class="t" style="left:680.85px;width:90px;text-align:right;top:428.99px;font-size:11px;color:#000;letter-spacing:0.85px;font-weight:normal;">3.35</span>
<div style="left:6px;top:446px;width:793px;height:16px;background:#aeaeae"></div>
<div style="left:6px;top:446px;width:354px;height:16px;overflow:hidden">
<span class="t" style="left:68.4px;top:-1.01px;font-size:11px;color:#000;letter-spacing:0.85px">AssemblyHelper.IsInternalAssembly()</span>
</div>
<span class="t" style="left:335.85px;width:90px;text-align:right;top:444.99px;font-size:11px;color:#000;letter-spacing:0.85px;font-weight:normal;">0.0%</span>
<span class="t" style="left:404.85px;width:90px;text-align:right;top:444.99px;font-size:11px;color:#000;letter-spacing:0.85px;font-weight:normal;">0.0%</span>
<span class="t" style="left:473.85px;width:90px;text-align:right;top:444.99px;font-size:11px;color:#000;letter-spacing:0.85px;font-weight:normal;">1</span>
<span class="t" style="left:543.85px;width:90px;text-align:right;top:444.99px;font-size:11px;color:#000;letter-spacing:0.85px;font-weight:normal;">489 B</span>
<span class="t" style="left:611.85px;width:90px;text-align:right;top:444.99px;font-size:11px;color:#000;letter-spacing:0.85px;font-weight:normal;">0.79</span>
<span class="t" style="left:680.85px;width:90px;text-align:right;top:444.99px;font-size:11px;color:#000;letter-spacing:0.85px;font-weight:normal;">0.79</span>
<div style="left:6px;top:462px;width:793px;height:16px;background:#b4b4b4"></div>
<div style="left:6px;top:462px;width:354px;height:16px;overflow:hidden">
<span class="t" style="left:68.4px;top:-1.01px;font-size:11px;color:#000;letter-spacing:0.85px">File.Read</span>
</div>
<span class="t" style="left:335.85px;width:90px;text-align:right;top:460.99px;font-size:11px;color:#000;letter-spacing:0.85px;font-weight:normal;">0.0%</span>
<span class="t" style="left:404.85px;width:90px;text-align:right;top:460.99px;font-size:11px;color:#000;letter-spacing:0.85px;font-weight:normal;">0.0%</span>
<span class="t" style="left:473.85px;width:90px;text-align:right;top:460.99px;font-size:11px;color:#000;letter-spacing:0.85px;font-weight:normal;">34</span>
<span class="t" style="left:543.85px;width:90px;text-align:right;top:460.99px;font-size:11px;color:#000;letter-spacing:0.85px;font-weight:normal;">0 B</span>
<span class="t" style="left:611.85px;width:90px;text-align:right;top:460.99px;font-size:11px;color:#000;letter-spacing:0.85px;font-weight:normal;">0.06</span>
<span class="t" style="left:680.85px;width:90px;text-align:right;top:460.99px;font-size:11px;color:#000;letter-spacing:0.85px;font-weight:normal;">0.06</span>
<div style="left:6px;top:478px;width:793px;height:16px;background:#aeaeae"></div>
<div style="left:6px;top:478px;width:354px;height:16px;overflow:hidden">
<span class="t" style="left:68.4px;top:-1.01px;font-size:11px;color:#000;letter-spacing:0.85px">File.Open</span>
</div>
<span class="t" style="left:335.85px;width:90px;text-align:right;top:476.99px;font-size:11px;color:#000;letter-spacing:0.85px;font-weight:normal;">0.0%</span>
<span class="t" style="left:404.85px;width:90px;text-align:right;top:476.99px;font-size:11px;color:#000;letter-spacing:0.85px;font-weight:normal;">0.0%</span>
<span class="t" style="left:473.85px;width:90px;text-align:right;top:476.99px;font-size:11px;color:#000;letter-spacing:0.85px;font-weight:normal;">1</span>
<span class="t" style="left:543.85px;width:90px;text-align:right;top:476.99px;font-size:11px;color:#000;letter-spacing:0.85px;font-weight:normal;">0 B</span>
<span class="t" style="left:611.85px;width:90px;text-align:right;top:476.99px;font-size:11px;color:#000;letter-spacing:0.85px;font-weight:normal;">0.03</span>
<span class="t" style="left:680.85px;width:90px;text-align:right;top:476.99px;font-size:11px;color:#000;letter-spacing:0.85px;font-weight:normal;">0.03</span>
<div style="left:6px;top:494px;width:793px;height:16px;background:#b4b4b4"></div>
<div style="left:6px;top:494px;width:354px;height:16px;overflow:hidden">
<span class="t" style="left:68.4px;top:-1.01px;font-size:11px;color:#000;letter-spacing:0.85px">EditorCompilationInterface.SetAllUnityAssemblies(</span>
</div>
<span class="t" style="left:335.85px;width:90px;text-align:right;top:492.99px;font-size:11px;color:#000;letter-spacing:0.85px;font-weight:normal;">0.0%</span>
<span class="t" style="left:404.85px;width:90px;text-align:right;top:492.99px;font-size:11px;color:#000;letter-spacing:0.85px;font-weight:normal;">0.0%</span>
<span class="t" style="left:473.85px;width:90px;text-align:right;top:492.99px;font-size:11px;color:#000;letter-spacing:0.85px;font-weight:normal;">1</span>
<span class="t" style="left:543.85px;width:90px;text-align:right;top:492.99px;font-size:11px;color:#000;letter-spacing:0.85px;font-weight:normal;">0 B</span>
<span class="t" style="left:611.85px;width:90px;text-align:right;top:492.99px;font-size:11px;color:#000;letter-spacing:0.85px;font-weight:normal;">0.00</span>
<span class="t" style="left:680.85px;width:90px;text-align:right;top:492.99px;font-size:11px;color:#000;letter-spacing:0.85px;font-weight:normal;">0.00</span>
<div style="left:6px;top:510px;width:793px;height:16px;background:#aeaeae"></div>
<div style="left:6px;top:510px;width:354px;height:16px;overflow:hidden">
<span class="t" style="left:68.4px;top:-1.01px;font-size:11px;color:#000;letter-spacing:0.85px">EditorCompilationInterface.SetAllPrecompiledAsse</span>
</div>
<span class="t" style="left:335.85px;width:90px;text-align:right;top:508.99px;font-size:11px;color:#000;letter-spacing:0.85px;font-weight:normal;">0.0%</span>
<span class="t" style="left:404.85px;width:90px;text-align:right;top:508.99px;font-size:11px;color:#000;letter-spacing:0.85px;font-weight:normal;">0.0%</span>
<span class="t" style="left:473.85px;width:90px;text-align:right;top:508.99px;font-size:11px;color:#000;letter-spacing:0.85px;font-weight:normal;">1</span>
<span class="t" style="left:543.85px;width:90px;text-align:right;top:508.99px;font-size:11px;color:#000;letter-spacing:0.85px;font-weight:normal;">0 B</span>
<span class="t" style="left:611.85px;width:90px;text-align:right;top:508.99px;font-size:11px;color:#000;letter-spacing:0.85px;font-weight:normal;">0.00</span>
<span class="t" style="left:680.85px;width:90px;text-align:right;top:508.99px;font-size:11px;color:#000;letter-spacing:0.85px;font-weight:normal;">0.00</span>
<div style="left:6px;top:526px;width:793px;height:16px;background:#b4b4b4"></div>
<svg style="left:46px;top:529.5px" width="9" height="10"><path d="M0 0.5v9l8-4.5z" fill="#707070"/></svg>
<div style="left:6px;top:526px;width:354px;height:16px;overflow:hidden">
<span class="t" style="left:54.5px;top:-1.01px;font-size:11px;color:#000;letter-spacing:0.85px">CreateAndSetChildDomain</span>
</div>
<span class="t" style="left:335.85px;width:90px;text-align:right;top:524.99px;font-size:11px;color:#000;letter-spacing:0.85px;font-weight:normal;">0.3%</span>
<span class="t" style="left:404.85px;width:90px;text-align:right;top:524.99px;font-size:11px;color:#000;letter-spacing:0.85px;font-weight:normal;">0.3%</span>
<span class="t" style="left:473.85px;width:90px;text-align:right;top:524.99px;font-size:11px;color:#000;letter-spacing:0.85px;font-weight:normal;">1</span>
<span class="t" style="left:543.85px;width:90px;text-align:right;top:524.99px;font-size:11px;color:#000;letter-spacing:0.85px;font-weight:normal;">1.7 KB</span>
<span class="t" style="left:611.85px;width:90px;text-align:right;top:524.99px;font-size:11px;color:#000;letter-spacing:0.85px;font-weight:normal;">330.12</span>
<span class="t" style="left:680.85px;width:90px;text-align:right;top:524.99px;font-size:11px;color:#000;letter-spacing:0.85px;font-weight:normal;">329.09</span>
<div style="left:6px;top:542px;width:793px;height:16px;background:#aeaeae"></div>
<svg style="left:46px;top:545.5px" width="9" height="10"><path d="M0 0.5v9l8-4.5z" fill="#707070"/></svg>
<div style="left:6px;top:542px;width:354px;height:16px;overflow:hidden">
<span class="t" style="left:54.5px;top:-1.01px;font-size:11px;color:#000;letter-spacing:0.85px">ModuleManager.Initialize()</span>
</div>
<span class="t" style="left:335.85px;width:90px;text-align:right;top:540.99px;font-size:11px;color:#000;letter-spacing:0.85px;font-weight:normal;">0.1%</span>
<span class="t" style="left:404.85px;width:90px;text-align:right;top:540.99px;font-size:11px;color:#000;letter-spacing:0.85px;font-weight:normal;">0.1%</span>
<span class="t" style="left:473.85px;width:90px;text-align:right;top:540.99px;font-size:11px;color:#000;letter-spacing:0.85px;font-weight:normal;">1</span>
<span class="t" style="left:543.85px;width:90px;text-align:right;top:540.99px;font-size:11px;color:#000;letter-spacing:0.85px;font-weight:normal;">0.9 MB</span>
<span class="t" style="left:611.85px;width:90px;text-align:right;top:540.99px;font-size:11px;color:#000;letter-spacing:0.85px;font-weight:normal;">109.25</span>
<span class="t" style="left:680.85px;width:90px;text-align:right;top:540.99px;font-size:11px;color:#000;letter-spacing:0.85px;font-weight:normal;">105.45</span>
<div style="left:6px;top:558px;width:793px;height:16px;background:#b4b4b4"></div>
<svg style="left:46px;top:561.5px" width="9" height="10"><path d="M0 0.5v9l8-4.5z" fill="#707070"/></svg>
<div style="left:6px;top:558px;width:354px;height:16px;overflow:hidden">
<span class="t" style="left:54.5px;top:-1.01px;font-size:11px;color:#000;letter-spacing:0.85px">RebuildScriptCaches</span>
</div>
<span class="t" style="left:335.85px;width:90px;text-align:right;top:556.99px;font-size:11px;color:#000;letter-spacing:0.85px;font-weight:normal;">0.1%</span>
<span class="t" style="left:404.85px;width:90px;text-align:right;top:556.99px;font-size:11px;color:#000;letter-spacing:0.85px;font-weight:normal;">0.0%</span>
<span class="t" style="left:473.85px;width:90px;text-align:right;top:556.99px;font-size:11px;color:#000;letter-spacing:0.85px;font-weight:normal;">1</span>
<span class="t" style="left:543.85px;width:90px;text-align:right;top:556.99px;font-size:11px;color:#000;letter-spacing:0.85px;font-weight:normal;">1.7 MB</span>
<span class="t" style="left:611.85px;width:90px;text-align:right;top:556.99px;font-size:11px;color:#000;letter-spacing:0.85px;font-weight:normal;">106.53</span>
<span class="t" style="left:680.85px;width:90px;text-align:right;top:556.99px;font-size:11px;color:#000;letter-spacing:0.85px;font-weight:normal;">61.93</span>
<div style="left:6px;top:574px;width:793px;height:16px;background:#aeaeae"></div>
<svg style="left:46px;top:577.5px" width="9" height="10"><path d="M0 0.5v9l8-4.5z" fill="#707070"/></svg>
<div style="left:6px;top:574px;width:354px;height:16px;overflow:hidden">
<span class="t" style="left:54.5px;top:-1.01px;font-size:11px;color:#000;letter-spacing:0.85px">AwakeFromLoad Backups</span>
</div>
<span class="t" style="left:335.85px;width:90px;text-align:right;top:572.99px;font-size:11px;color:#000;letter-spacing:0.85px;font-weight:normal;">0.0%</span>
<span class="t" style="left:404.85px;width:90px;text-align:right;top:572.99px;font-size:11px;color:#000;letter-spacing:0.85px;font-weight:normal;">0.0%</span>
<span class="t" style="left:473.85px;width:90px;text-align:right;top:572.99px;font-size:11px;color:#000;letter-spacing:0.85px;font-weight:normal;">1</span>
<span class="t" style="left:543.85px;width:90px;text-align:right;top:572.99px;font-size:11px;color:#000;letter-spacing:0.85px;font-weight:normal;">470.6 KB</span>
<span class="t" style="left:611.85px;width:90px;text-align:right;top:572.99px;font-size:11px;color:#000;letter-spacing:0.85px;font-weight:normal;">71.79</span>
<span class="t" style="left:680.85px;width:90px;text-align:right;top:572.99px;font-size:11px;color:#000;letter-spacing:0.85px;font-weight:normal;">0.24</span>
<div style="left:6px;top:590px;width:793px;height:16px;background:#b4b4b4"></div>
<svg style="left:46px;top:593.5px" width="9" height="10"><path d="M0 0.5v9l8-4.5z" fill="#707070"/></svg>
<div style="left:6px;top:590px;width:354px;height:16px;overflow:hidden">
<span class="t" style="left:54.5px;top:-1.01px;font-size:11px;color:#000;letter-spacing:0.85px">GUIUtility.ProcessEvent()</span>
</div>
<span class="t" style="left:335.85px;width:90px;text-align:right;top:588.99px;font-size:11px;color:#000;letter-spacing:0.85px;font-weight:normal;">0.0%</span>
<span class="t" style="left:404.85px;width:90px;text-align:right;top:588.99px;font-size:11px;color:#000;letter-spacing:0.85px;font-weight:normal;">0.0%</span>
<span class="t" style="left:473.85px;width:90px;text-align:right;top:588.99px;font-size:11px;color:#000;letter-spacing:0.85px;font-weight:normal;">1</span>
<span class="t" style="left:543.85px;width:90px;text-align:right;top:588.99px;font-size:11px;color:#000;letter-spacing:0.85px;font-weight:normal;">238.8 KB</span>
<span class="t" style="left:611.85px;width:90px;text-align:right;top:588.99px;font-size:11px;color:#000;letter-spacing:0.85px;font-weight:normal;">66.58</span>
<span class="t" style="left:680.85px;width:90px;text-align:right;top:588.99px;font-size:11px;color:#000;letter-spacing:0.85px;font-weight:normal;">56.99</span>
<div style="left:6px;top:606px;width:793px;height:16px;background:#aeaeae"></div>
<svg style="left:46px;top:609.5px" width="9" height="10"><path d="M0 0.5v9l8-4.5z" fill="#707070"/></svg>
<div style="left:6px;top:606px;width:354px;height:16px;overflow:hidden">
<span class="t" style="left:54.5px;top:-1.01px;font-size:11px;color:#000;letter-spacing:0.85px">AttributeHelper.ExtractGizmos()</span>
</div>
<span class="t" style="left:335.85px;width:90px;text-align:right;top:604.99px;font-size:11px;color:#000;letter-spacing:0.85px;font-weight:normal;">0.0%</span>
<span class="t" style="left:404.85px;width:90px;text-align:right;top:604.99px;font-size:11px;color:#000;letter-spacing:0.85px;font-weight:normal;">0.0%</span>
<span class="t" style="left:473.85px;width:90px;text-align:right;top:604.99px;font-size:11px;color:#000;letter-spacing:0.85px;font-weight:normal;">31</span>
<span class="t" style="left:543.85px;width:90px;text-align:right;top:604.99px;font-size:11px;color:#000;letter-spacing:0.85px;font-weight:normal;">7.4 MB</span>
<span class="t" style="left:611.85px;width:90px;text-align:right;top:604.99px;font-size:11px;color:#000;letter-spacing:0.85px;font-weight:normal;">65.77</span>
<span class="t" style="left:680.85px;width:90px;text-align:right;top:604.99px;font-size:11px;color:#000;letter-spacing:0.85px;font-weight:normal;">51.49</span>
<div style="left:6px;top:622px;width:793px;height:16px;background:#b4b4b4"></div>
<svg style="left:46px;top:625.5px" width="9" height="10"><path d="M0 0.5v9l8-4.5z" fill="#707070"/></svg>
<div style="left:6px;top:622px;width:354px;height:16px;overflow:hidden">
<span class="t" style="left:54.5px;top:-1.01px;font-size:11px;color:#000;letter-spacing:0.85px">LoadAssemblies</span>
</div>
<span class="t" style="left:335.85px;width:90px;text-align:right;top:620.99px;font-size:11px;color:#000;letter-spacing:0.85px;font-weight:normal;">0.0%</span>
<span class="t" style="left:404.85px;width:90px;text-align:right;top:620.99px;font-size:11px;color:#000;letter-spacing:0.85px;font-weight:normal;">0.0%</span>
<span class="t" style="left:473.85px;width:90px;text-align:right;top:620.99px;font-size:11px;color:#000;letter-spacing:0.85px;font-weight:normal;">2</span>
<span class="t" style="left:543.85px;width:90px;text-align:right;top:620.99px;font-size:11px;color:#000;letter-spacing:0.85px;font-weight:normal;">154.4 KB</span>
<span class="t" style="left:611.85px;width:90px;text-align:right;top:620.99px;font-size:11px;color:#000;letter-spacing:0.85px;font-weight:normal;">63.93</span>
<span class="t" style="left:680.85px;width:90px;text-align:right;top:620.99px;font-size:11px;color:#000;letter-spacing:0.85px;font-weight:normal;">14.09</span>
<div style="left:56px;top:428px;width:719px;height:5px;background:#ff0000"></div>
<div style="left:6px;top:638px;width:793px;height:3px;background:#b5b5b5"></div>
<div style="left:6px;top:640px;width:808px;height:1px;background:#c4c4bc"></div>
<div style="left:799px;top:382px;width:15px;height:259px;background:linear-gradient(90deg,#929292,#c0c0c0 45%,#a6a6a6)"></div>
<svg style="left:801px;top:387px" width="11" height="7"><path d="M5.5 0.5L10 6H1z" fill="#222"/></svg>
<svg style="left:801px;top:630px" width="11" height="7"><path d="M5.5 6.5L10 1H1z" fill="#222"/></svg>
<div style="left:800px;top:400px;width:13px;height:32px;background:linear-gradient(90deg,#7e8aa5,#56637f);border-radius:6px;box-shadow:inset 0 0 0 1px #45506a"></div>
<div style="left:800px;top:432px;width:13px;height:192px;background:linear-gradient(90deg,#a8a8a8,#c4c4c4 45%,#b4b4b4);border-radius:0 0 6px 6px"></div>
<div style="left:6px;top:654px;width:810px;height:637px;background:#6a74aa"></div>
<div style="left:7px;top:655px;width:808px;height:635px;background:#b4b4b4"></div>
<div style="left:7px;top:655px;width:808px;height:22px;background:#8a8a8a"></div>
<div style="left:7px;top:661px;width:98px;height:16px;background:linear-gradient(#d4d4d4,#c4c4c4);border-radius:3px 3px 0 0;box-shadow:inset 0 0 0 1px #9c9c9c"></div>
<svg style="left:17px;top:664px" width="11" height="11" viewBox="0 0 11 11"><rect x="4.5" y="0" width="2" height="2" fill="#555"/><circle cx="5.5" cy="6.3" r="4.3" fill="#e8e8e8" stroke="#444" stroke-width="1"/><path d="M5.5 6.3V2.6A3.7 3.7 0 0 1 8.6 4.5z" fill="#d0202a"/><path d="M5.5 3v6.5M2.2 6.3h6.6" stroke="#aaa" stroke-width="0.6"/></svg>
<span class="t" style="left:30px;top:658.99px;font-size:11px;color:#000;letter-spacing:0.75px;font-weight:normal;">Profiler</span>
<div style="left:789px;top:659px;width:6px;height:5px;border:1px solid #222;border-top-width:2px;box-sizing:border-box;background:#9a9a9a"></div>
<svg style="left:800px;top:657px" width="9" height="9"><path d="M1 1L8 8M8 1L1 8" stroke="#222" stroke-width="1.1"/></svg>
<svg style="left:796px;top:669px" width="15" height="8"><path d="M0 2h5l-2.5 3z" fill="#333"/><path d="M6 1.5h8M6 4h8M6 6.5h8" stroke="#222" stroke-width="1"/></svg>
<div style="left:7px;top:677px;width:808px;height:16px;background:linear-gradient(#d3d3d3,#b3b3b3)"></div>
<div style="left:7px;top:692px;width:808px;height:1px;background:#8c8c8c"></div>
<div style="left:12px;top:677px;width:1px;height:16px;background:#8e8e8e"></div>
<div style="left:133px;top:677px;width:1px;height:16px;background:#8e8e8e"></div>
<div style="left:194px;top:677px;width:1px;height:16px;background:#8e8e8e"></div>
<div style="left:265px;top:677px;width:1px;height:16px;background:#8e8e8e"></div>
<div style="left:339px;top:677px;width:1px;height:16px;background:#8e8e8e"></div>
<div style="left:440px;top:677px;width:1px;height:16px;background:#8e8e8e"></div>
<div style="left:444px;top:677px;width:1px;height:16px;background:#8e8e8e"></div>
<div style="left:481px;top:677px;width:1px;height:16px;background:#8e8e8e"></div>
<div style="left:515px;top:677px;width:1px;height:16px;background:#8e8e8e"></div>
<div style="left:550px;top:677px;width:1px;height:16px;background:#8e8e8e"></div>
<div style="left:706px;top:677px;width:1px;height:16px;background:#8e8e8e"></div>
<div style="left:731px;top:677px;width:1px;height:16px;background:#8e8e8e"></div>
<div style="left:758px;top:677px;width:1px;height:16px;background:#8e8e8e"></div>
<div style="left:768px;top:677px;width:1px;height:16px;background:#8e8e8e"></div>
<div style="left:265px;top:677px;width:74px;height:16px;background:linear-gradient(#dedede,#c6c6c6)"></div>
<span class="t" style="left:18px;top:676.24px;font-size:10px;color:#000;letter-spacing:0.55px;font-weight:normal;-webkit-text-stroke:0.12px #000">Add Profiler</span>
<svg style="left:124px;top:683px" width="6" height="4"><path d="M0 0h5l-2.5 3z" fill="#444"/></svg>
<svg style="left:141px;top:679px" width="11" height="11" viewBox="0 0 11 11"><rect x="4.5" y="0" width="2" height="2" fill="#555"/><circle cx="5.5" cy="6.3" r="4.3" fill="#e8e8e8" stroke="#444" stroke-width="1"/><path d="M5.5 6.3V2.6A3.7 3.7 0 0 1 8.6 4.5z" fill="#d0202a"/><path d="M5.5 3v6.5M2.2 6.3h6.6" stroke="#aaa" stroke-width="0.6"/></svg>
<span class="t" style="left:154px;top:676.24px;font-size:10px;color:#000;letter-spacing:0.6px;font-weight:normal;-webkit-text-stroke:0.12px #000">Record</span>
<span class="t" style="left:198px;top:676.24px;font-size:10px;color:#000;letter-spacing:0.55px;font-weight:normal;-webkit-text-stroke:0.12px #000">Deep Profile</span>
<span class="t" style="left:269px;top:676.24px;font-size:10px;color:#000;letter-spacing:0.55px;font-weight:normal;-webkit-text-stroke:0.12px #000">Profile Editor</span>
<span class="t" style="left:345px;top:676.24px;font-size:10px;color:#000;letter-spacing:0.55px;font-weight:normal;-webkit-text-stroke:0.12px #000">Connected Playe</span>
<svg style="left:432px;top:683px" width="6" height="4"><path d="M0 0h5l-2.5 3z" fill="#444"/></svg>
<span class="t" style="left:449px;top:676.24px;font-size:10px;color:#000;letter-spacing:0.55px;font-weight:normal;-webkit-text-stroke:0.12px #000">Clear</span>
<span class="t" style="left:486px;top:676.24px;font-size:10px;color:#000;letter-spacing:0.55px;font-weight:normal;-webkit-text-stroke:0.12px #000">Load</span>
<span class="t" style="left:520px;top:676.24px;font-size:10px;color:#000;letter-spacing:0.55px;font-weight:normal;-webkit-text-stroke:0.12px #000">Save</span>
<span class="t" style="left:561px;top:676.74px;font-size:10px;color:#000;letter-spacing:0.4px;font-weight:normal;-webkit-text-stroke:0.12px #000">Frame:</span>
<span class="t" style="left:613.5px;top:676.74px;font-size:10px;color:#000;letter-spacing:1.36px;font-weight:normal;-webkit-text-stroke:0.12px #000">1036 / 1118</span>
<svg style="left:715px;top:680px" width="8" height="10"><path d="M6 1v8l-5-4z" fill="#222"/></svg>
<svg style="left:741px;top:680px" width="8" height="10"><path d="M1 1v8l5-4z" fill="#222"/></svg>
<span class="t" style="left:774px;top:676.24px;font-size:10px;color:#000;letter-spacing:0.63px;font-weight:normal;-webkit-text-stroke:0.12px #000">Current</span>
<div style="left:7px;top:693px;width:168px;height:120px;background:linear-gradient(#5b6790,#7380ab)"></div>
<div style="left:7px;top:813px;width:168px;height:1px;background:#4a4a4a"></div>
<div style="left:7px;top:814px;width:168px;height:119px;background:#b6b6b6"></div>
<div style="left:7px;top:933px;width:168px;height:1px;background:#4a4a4a"></div>
<div style="left:7px;top:934px;width:168px;height:58px;background:#b6b6b6"></div>
<svg style="left:164px;top:698px" width="8" height="8"><path d="M0.5 0.5L7.5 7.5M7.5 0.5L0.5 7.5" stroke="#222" stroke-width="1"/></svg>
<svg style="left:164px;top:818px" width="8" height="8"><path d="M0.5 0.5L7.5 7.5M7.5 0.5L0.5 7.5" stroke="#222" stroke-width="1"/></svg>
<svg style="left:164px;top:938px" width="8" height="8"><path d="M0.5 0.5L7.5 7.5M7.5 0.5L0.5 7.5" stroke="#222" stroke-width="1"/></svg>
<span class="t" style="left:56.5px;top:704.50px;font-size:13px;color:#111;letter-spacing:0px;font-weight:normal;">CPU Usage</span>
<div style="left:56px;top:724px;width:7px;height:7px;background:#6c8a18;box-shadow:inset 0 0 0 1px rgba(0,0,0,0.25)"></div>
<span class="t" style="left:68.3px;top:718.01px;font-size:9.5px;color:#000;letter-spacing:0.85px;font-weight:normal;-webkit-text-stroke:0.12px #000">Rendering</span>
<div style="left:56px;top:735px;width:7px;height:7px;background:#347f98;box-shadow:inset 0 0 0 1px rgba(0,0,0,0.25)"></div>
<span class="t" style="left:68.3px;top:729.01px;font-size:9.5px;color:#000;letter-spacing:0.85px;font-weight:normal;-webkit-text-stroke:0.12px #000">Scripts</span>
<div style="left:56px;top:746px;width:7px;height:7px;background:#bd6612;box-shadow:inset 0 0 0 1px rgba(0,0,0,0.25)"></div>
<span class="t" style="left:68.3px;top:740.01px;font-size:9.5px;color:#000;letter-spacing:0.85px;font-weight:normal;-webkit-text-stroke:0.12px #000">Physics</span>
<div style="left:56px;top:757px;width:7px;height:7px;background:#625312;box-shadow:inset 0 0 0 1px rgba(0,0,0,0.25)"></div>
<span class="t" style="left:68.3px;top:751.01px;font-size:9.5px;color:#000;letter-spacing:0.85px;font-weight:normal;-webkit-text-stroke:0.12px #000">GarbageCollector</span>
<div style="left:56px;top:768px;width:7px;height:7px;background:#c49612;box-shadow:inset 0 0 0 1px rgba(0,0,0,0.25)"></div>
<span class="t" style="left:68.3px;top:762.01px;font-size:9.5px;color:#000;letter-spacing:0.85px;font-weight:normal;-webkit-text-stroke:0.12px #000">VSync</span>
<div style="left:56px;top:779px;width:7px;height:7px;background:#7c260e;box-shadow:inset 0 0 0 1px rgba(0,0,0,0.25)"></div>
<span class="t" style="left:68.3px;top:773.01px;font-size:9.5px;color:#000;letter-spacing:0.85px;font-weight:normal;-webkit-text-stroke:0.12px #000">Gi</span>
<div style="left:56px;top:790px;width:7px;height:7px;background:#55427f;box-shadow:inset 0 0 0 1px rgba(0,0,0,0.25)"></div>
<span class="t" style="left:68.3px;top:784.01px;font-size:9.5px;color:#000;letter-spacing:0.85px;font-weight:normal;-webkit-text-stroke:0.12px #000">UI</span>
<div style="left:56px;top:801px;width:7px;height:7px;background:#66661e;box-shadow:inset 0 0 0 1px rgba(0,0,0,0.25)"></div>
<span class="t" style="left:68.3px;top:795.01px;font-size:9.5px;color:#000;letter-spacing:0.85px;font-weight:normal;-webkit-text-stroke:0.12px #000">Others</span>
<svg style="left:11px;top:699px" width="40" height="40" viewBox="0 0 40 40"><defs><clipPath id="cb11699"><circle cx="17" cy="21" r="9"/></clipPath><radialGradient id="rim11699" cx="35%" cy="30%" r="75%"><stop offset="0" stop-color="#f4f4f4"/><stop offset="0.7" stop-color="#b8b8b8"/><stop offset="1" stop-color="#6a6a6a"/></radialGradient></defs><rect x="13.5" y="8" width="2" height="4" fill="#aaa"/><circle cx="14.5" cy="7.8" r="1.8" fill="#d8d8d8" stroke="#888" stroke-width="0.6"/><circle cx="17" cy="21" r="10.5" fill="url(#rim11699)"/><circle cx="17" cy="21" r="8.6" fill="#ececec"/><circle cx="24.60" cy="21.00" r="0.7" fill="#555"/><circle cx="23.58" cy="24.80" r="0.7" fill="#555"/><circle cx="20.80" cy="27.58" r="0.7" fill="#555"/><circle cx="17.00" cy="28.60" r="0.7" fill="#555"/><circle cx="13.20" cy="27.58" r="0.7" fill="#555"/><circle cx="10.42" cy="24.80" r="0.7" fill="#555"/><circle cx="9.40" cy="21.00" r="0.7" fill="#555"/><circle cx="10.42" cy="17.20" r="0.7" fill="#555"/><circle cx="13.20" cy="14.42" r="0.7" fill="#555"/><circle cx="17.00" cy="13.40" r="0.7" fill="#555"/><circle cx="20.80" cy="14.42" r="0.7" fill="#555"/><circle cx="23.58" cy="17.20" r="0.7" fill="#555"/><circle cx="23.8" cy="12.2" r="6.2" fill="#e08c8c" clip-path="url(#cb11699)" opacity="0.9"/><circle cx="23.8" cy="12.2" r="6.5" fill="none" stroke="#b4b4b4" stroke-width="1.3"/><path d="M14.5 20.5L19 19" stroke="#b81818" stroke-width="1.4"/><path d="M28.5 18.5L35 27" stroke="#1e1e1e" stroke-width="2.8" stroke-linecap="round"/></svg>
<span class="t" style="left:56.5px;top:825.20px;font-size:13px;color:#111;letter-spacing:0px;font-weight:normal;">Rendering</span>
<div style="left:56px;top:844.5px;width:7px;height:7px;background:#6c8a18;box-shadow:inset 0 0 0 1px rgba(0,0,0,0.25)"></div>
<span class="t" style="left:68.3px;top:838.51px;font-size:9.5px;color:#000;letter-spacing:0.85px;font-weight:normal;-webkit-text-stroke:0.12px #000">Batches</span>
<div style="left:56px;top:855.5px;width:7px;height:7px;background:#347f98;box-shadow:inset 0 0 0 1px rgba(0,0,0,0.25)"></div>
<span class="t" style="left:68.3px;top:849.51px;font-size:9.5px;color:#000;letter-spacing:0.85px;font-weight:normal;-webkit-text-stroke:0.12px #000">SetPass Calls</span>
<div style="left:56px;top:866.5px;width:7px;height:7px;background:#bd6612;box-shadow:inset 0 0 0 1px rgba(0,0,0,0.25)"></div>
<span class="t" style="left:68.3px;top:860.51px;font-size:9.5px;color:#000;letter-spacing:0.85px;font-weight:normal;-webkit-text-stroke:0.12px #000">Triangles</span>
<div style="left:56px;top:877.5px;width:7px;height:7px;background:#625312;box-shadow:inset 0 0 0 1px rgba(0,0,0,0.25)"></div>
<span class="t" style="left:68.3px;top:871.51px;font-size:9.5px;color:#000;letter-spacing:0.85px;font-weight:normal;-webkit-text-stroke:0.12px #000">Vertices</span>
<svg style="left:11px;top:819px" width="40" height="40" viewBox="0 0 40 40"><defs><radialGradient id="tg11819" cx="35%" cy="30%" r="80%"><stop offset="0" stop-color="#e6e6e6"/><stop offset="0.45" stop-color="#a4a4a4"/><stop offset="0.8" stop-color="#5e5e5e"/><stop offset="1" stop-color="#3a3a3a"/></radialGradient><clipPath id="tc11819"><ellipse cx="20.8" cy="19.5" rx="14.2" ry="10.2"/></clipPath></defs><ellipse cx="20.8" cy="19.5" rx="14.2" ry="10.2" fill="url(#tg11819)"/><path d="M16 30.5 Q31 30 35.5 18" stroke="#37607f" stroke-width="2.6" fill="none" clip-path="url(#tc11819)"/><ellipse cx="12.5" cy="18.5" rx="4" ry="3.5" fill="#fff" opacity="0.25"/><ellipse cx="20.3" cy="16" rx="7.2" ry="4.7" fill="#262626" opacity="0.85"/><ellipse cx="20.3" cy="16.2" rx="6.4" ry="4" fill="#456f94"/><ellipse cx="21.8" cy="17.6" rx="5.2" ry="2.8" fill="#b2b2b2"/></svg>
<span class="t" style="left:56.5px;top:945.10px;font-size:13px;color:#111;letter-spacing:0px;font-weight:normal;">Memory</span>
<div style="left:56px;top:965px;width:7px;height:7px;background:#6c8a18;box-shadow:inset 0 0 0 1px rgba(0,0,0,0.25)"></div>
<span class="t" style="left:68.3px;top:959.01px;font-size:9.5px;color:#000;letter-spacing:0.85px;font-weight:normal;-webkit-text-stroke:0.12px #000">Total Allocated</span>
<div style="left:56px;top:976px;width:7px;height:7px;background:#347f98;box-shadow:inset 0 0 0 1px rgba(0,0,0,0.25)"></div>
<span class="t" style="left:68.3px;top:970.01px;font-size:9.5px;color:#000;letter-spacing:0.85px;font-weight:normal;-webkit-text-stroke:0.12px #000">Texture Memory</span>
<div style="left:56px;top:987px;width:7px;height:7px;background:#bd6612;box-shadow:inset 0 0 0 1px rgba(0,0,0,0.25)"></div>
<span class="t" style="left:68.3px;top:981.01px;font-size:9.5px;color:#000;letter-spacing:0.85px;font-weight:normal;-webkit-text-stroke:0.12px #000">Mesh Memory</span>
<svg style="left:11px;top:939px" width="40" height="40" viewBox="0 0 40 40"><rect x="7.20" y="11" width="1.4" height="2.5" fill="#9a9a9a"/><rect x="10.75" y="11" width="1.4" height="2.5" fill="#9a9a9a"/><rect x="14.30" y="11" width="1.4" height="2.5" fill="#9a9a9a"/><rect x="17.85" y="11" width="1.4" height="2.5" fill="#9a9a9a"/><rect x="21.40" y="11" width="1.4" height="2.5" fill="#9a9a9a"/><rect x="24.95" y="11" width="1.4" height="2.5" fill="#9a9a9a"/><rect x="28.50" y="11" width="1.4" height="2.5" fill="#9a9a9a"/><rect x="32.05" y="11" width="1.4" height="2.5" fill="#9a9a9a"/><rect x="35.60" y="11" width="1.4" height="2.5" fill="#9a9a9a"/><circle cx="10.3" cy="30.5" r="1" fill="#d8d8d8"/><circle cx="14.3" cy="30.5" r="1" fill="#d8d8d8"/><circle cx="24.2" cy="30.5" r="1" fill="#d8d8d8"/><circle cx="31.5" cy="30.5" r="1" fill="#d8d8d8"/><rect x="6" y="13" width="30" height="15" fill="#3a3f46"/><rect x="6" y="13" width="30" height="2" fill="#8a8f94"/><rect x="6.5" y="15" width="29" height="6.5" fill="#555a61"/><circle cx="10.5" cy="20.5" r="2.3" fill="#3a3f46"/><circle cx="29.5" cy="20.5" r="2.3" fill="#3a3f46"/><rect x="14.5" y="19" width="10.5" height="3" fill="#9aa0a8" opacity="0.6"/><rect x="6" y="27" width="30" height="1.2" fill="#1e2226"/><rect x="34" y="21" width="2" height="3" fill="#b9b9b9"/></svg>
<div style="left:175px;top:693px;width:625px;height:299px;overflow:hidden;background:#2a2a2a">
<svg width="625" height="299" style="left:0;top:0"><g transform="translate(-174,-44)">
<defs><linearGradient id="gc1" x1="0" y1="0" x2="0" y2="1"><stop offset="0" stop-color="#3d3d3d"/><stop offset="1" stop-color="#2a2a2a"/></linearGradient><linearGradient id="gr1" x1="0" y1="0" x2="0" y2="1"><stop offset="0" stop-color="#444"/><stop offset="1" stop-color="#2c2c2c"/></linearGradient><linearGradient id="gl1" x1="0" y1="0" x2="1" y2="0"><stop offset="0" stop-color="#222"/><stop offset="1" stop-color="#222" stop-opacity="0"/></linearGradient></defs>
<rect x="174" y="44" width="625" height="120" fill="url(#gc1)"/>
<rect x="174" y="164" width="625" height="1" fill="#181818"/>
<rect x="174" y="165" width="625" height="119" fill="url(#gr1)"/>
<rect x="174" y="284" width="625" height="59" fill="#3f3f3f"/>
<rect x="174" y="44" width="8" height="299" fill="url(#gl1)"/>
<rect x="174" y="44" width="1" height="299" fill="#1e1e1e"/>
<polygon points="176,156.7 178,156.9 180,157.0 182,157.3 184,156.9 186,157.3 188,155.7 190,156.4 192,157.3 194,156.8 196,157.2 198,155.8 200,156.4 202,156.0 204,156.6 206,156.6 208,155.6 210,156.0 212,156.1 214,157.2 216,157.0 218,155.9 220,157.0 222,155.8 224,156.7 226,155.8 228,155.6 230,157.2 232,156.0 234,156.0 236,157.4 238,157.2 240,156.1 242,157.3 244,156.6 246,156.8 248,156.0 250,157.3 252,156.8 254,157.3 256,157.2 258,156.1 260,156.3 262,155.9 264,155.9 266,155.7 268,156.1 270,156.7 272,155.6 274,156.8 276,156.2 278,156.2 280,157.1 282,156.5 284,156.2 286,156.5 288,156.9 290,155.7 292,157.4 294,155.6 296,156.9 298,157.1 300,155.6 302,157.0 304,156.3 306,156.6 308,155.6 310,155.7 312,155.9 314,157.3 316,156.0 318,157.0 320,157.3 322,157.3 324,156.2 326,156.2 328,156.5 330,157.0 332,155.8 334,156.9 336,157.0 338,157.1 340,155.7 342,157.3 344,155.8 346,156.2 348,156.7 350,157.3 352,156.2 354,157.3 356,156.6 358,156.2 360,156.2 362,155.9 364,155.7 366,155.9 368,156.8 370,157.4 372,155.9 374,155.7 376,157.4 378,156.6 380,156.3 382,156.0 384,156.7 386,157.1 388,156.4 390,156.4 392,155.7 394,157.2 396,155.7 398,156.5 400,157.1 402,155.8 404,156.9 406,157.3 408,156.7 410,157.0 412,155.8 414,156.4 416,155.9 418,157.1 420,156.1 422,156.4 424,157.4 426,157.1 428,157.4 430,156.4 432,156.5 434,156.9 436,156.5 438,156.1 440,156.3 442,155.9 444,156.3 446,157.4 448,157.3 450,156.7 452,156.5 454,156.2 456,155.8 458,156.1 460,157.0 462,157.2 464,156.3 466,157.0 468,157.0 470,156.9 472,156.8 474,157.0 476,156.3 478,156.9 480,156.1 482,156.5 484,157.0 486,156.8 488,156.1 490,157.3 492,156.8 494,156.6 496,155.6 498,156.6 500,156.1 502,156.8 504,156.4 506,157.1 508,156.8 510,157.0 512,156.2 514,156.8 516,156.9 518,157.1 520,156.2 522,157.1 524,157.2 526,156.8 528,157.4 530,157.3 532,156.5 534,156.6 536,155.9 538,157.1 540,157.3 542,156.5 544,156.8 546,156.9 548,156.9 550,155.9 552,157.0 554,156.6 556,156.8 558,156.4 560,156.7 562,157.0 564,156.7 566,156.9 568,155.6 570,155.9 572,156.4 574,156.8 576,156.0 578,156.8 580,156.7 582,155.7 584,156.4 586,156.0 588,155.7 590,155.8 592,156.2 594,155.9 596,155.9 598,155.7 600,156.4 602,156.3 604,156.7 606,156.7 608,156.0 610,157.2 612,155.6 614,156.3 614,163.5 176,163.5" fill="#4c4f1f"/>
<rect x="332" y="156.2" width="1" height="1" fill="#3a7896" opacity="0.5"/>
<rect x="248" y="155.9" width="1" height="1" fill="#3a7896" opacity="0.5"/>
<rect x="470" y="155.2" width="1" height="1" fill="#3a7896" opacity="0.5"/>
<rect x="208" y="155.6" width="1" height="1" fill="#3a7896" opacity="0.5"/>
<rect x="344" y="154.7" width="1" height="1" fill="#3a7896" opacity="0.5"/>
<rect x="469" y="155.5" width="1" height="1" fill="#3a7896" opacity="0.5"/>
<rect x="487" y="155.1" width="1" height="1" fill="#3a7896" opacity="0.5"/>
<rect x="370" y="156.1" width="1" height="1" fill="#3a7896" opacity="0.5"/>
<rect x="404" y="155.3" width="1" height="1" fill="#3a7896" opacity="0.5"/>
<rect x="478" y="155.8" width="1" height="1" fill="#3a7896" opacity="0.5"/>
<rect x="379" y="155.4" width="1" height="1" fill="#3a7896" opacity="0.5"/>
<rect x="270" y="155.7" width="1" height="1" fill="#3a7896" opacity="0.5"/>
<rect x="478" y="155.5" width="1" height="1" fill="#3a7896" opacity="0.5"/>
<rect x="291" y="156.4" width="1" height="1" fill="#3a7896" opacity="0.5"/>
<rect x="501" y="154.7" width="1" height="1" fill="#3a7896" opacity="0.5"/>
<rect x="528" y="154.5" width="1" height="1" fill="#3a7896" opacity="0.5"/>
<rect x="245" y="155.2" width="1" height="1" fill="#3a7896" opacity="0.5"/>
<rect x="504" y="155.6" width="1" height="1" fill="#3a7896" opacity="0.5"/>
<rect x="356" y="155.8" width="1" height="1" fill="#3a7896" opacity="0.5"/>
<rect x="478" y="155.3" width="1" height="1" fill="#3a7896" opacity="0.5"/>
<rect x="411" y="156.5" width="1" height="1" fill="#3a7896" opacity="0.5"/>
<rect x="442" y="155.1" width="1" height="1" fill="#3a7896" opacity="0.5"/>
<rect x="552" y="155.3" width="1" height="1" fill="#3a7896" opacity="0.5"/>
<rect x="271" y="155.7" width="1" height="1" fill="#3a7896" opacity="0.5"/>
<rect x="323" y="156.0" width="1" height="1" fill="#3a7896" opacity="0.5"/>
<rect x="344" y="155.5" width="1" height="1" fill="#3a7896" opacity="0.5"/>
<rect x="402" y="154.5" width="1" height="1" fill="#3a7896" opacity="0.5"/>
<rect x="347" y="155.5" width="1" height="1" fill="#3a7896" opacity="0.5"/>
<rect x="336" y="154.8" width="1" height="1" fill="#3a7896" opacity="0.5"/>
<rect x="202" y="154.7" width="1" height="1" fill="#3a7896" opacity="0.5"/>
<rect x="508" y="156.4" width="1" height="1" fill="#3a7896" opacity="0.5"/>
<rect x="315" y="155.1" width="1" height="1" fill="#3a7896" opacity="0.5"/>
<rect x="590" y="154.8" width="1" height="1" fill="#3a7896" opacity="0.5"/>
<rect x="390" y="154.5" width="1" height="1" fill="#3a7896" opacity="0.5"/>
<rect x="462" y="155.6" width="1" height="1" fill="#3a7896" opacity="0.5"/>
<rect x="314" y="156.4" width="1" height="1" fill="#3a7896" opacity="0.5"/>
<rect x="590" y="154.6" width="1" height="1" fill="#3a7896" opacity="0.5"/>
<rect x="440" y="155.0" width="1" height="1" fill="#3a7896" opacity="0.5"/>
<rect x="269" y="155.9" width="1" height="1" fill="#3a7896" opacity="0.5"/>
<rect x="336" y="155.1" width="1" height="1" fill="#3a7896" opacity="0.5"/>
<rect x="501" y="156.5" width="1" height="1" fill="#3a7896" opacity="0.5"/>
<rect x="455" y="155.8" width="1" height="1" fill="#3a7896" opacity="0.5"/>
<rect x="499" y="156.3" width="1" height="1" fill="#3a7896" opacity="0.5"/>
<rect x="250" y="154.5" width="1" height="1" fill="#3a7896" opacity="0.5"/>
<rect x="254" y="155.1" width="1" height="1" fill="#3a7896" opacity="0.5"/>
<rect x="463" y="155.9" width="1" height="1" fill="#3a7896" opacity="0.5"/>
<rect x="504" y="155.1" width="1" height="1" fill="#3a7896" opacity="0.5"/>
<rect x="461" y="154.6" width="1" height="1" fill="#3a7896" opacity="0.5"/>
<rect x="369" y="155.2" width="1" height="1" fill="#3a7896" opacity="0.5"/>
<rect x="571" y="156.1" width="1" height="1" fill="#3a7896" opacity="0.5"/>
<polygon points="615,124.7 617,124.0 619,126.8 621,127.4 623,124.5 625,127.4 627,125.0 629,126.1 631,128.0 633,127.0 635,127.4 637,128.8 639,127.2 641,128.3 643,128.2 645,126.4 647,127.4 649,127.6 651,128.5 653,126.3 655,127.8 657,125.5 659,124.0 661,127.9 663,126.9 665,127.2 667,126.4 669,125.6 671,124.8 673,127.5 675,128.4 677,128.9 679,126.7 681,126.1 683,126.7 685,124.2 687,127.7 689,125.3 691,124.4 693,124.3 695,128.7 697,125.7 699,126.1 701,124.3 703,126.0 705,126.4 707,124.6 709,124.6 711,127.1 713,128.1 715,124.6 717,128.5 719,129.0 721,127.5 723,126.2 725,124.9 727,124.9 729,128.0 731,124.3 733,125.1 735,126.8 737,127.3 739,127.7 741,125.4 743,126.9 745,124.6 747,126.0 749,127.1 751,124.0 753,124.5 755,127.4 757,126.4 759,125.8 761,127.3 763,128.6 765,124.7 767,125.5 769,126.8 771,127.4 773,125.5 775,128.7 777,126.7 779,125.1 781,124.3 783,125.2 785,128.2 787,125.4 789,128.9 791,128.0 793,128.3 795,126.3 797,125.9 797,163.5 615,163.5" fill="#4f581d"/>
<polygon points="618,151.7 620,151.3 622,152.4 624,153.3 626,151.3 628,154.3 630,153.0 632,152.8 634,152.6 636,152.9 638,154.7 640,151.6 642,153.1 644,153.2 646,152.6 648,154.3 650,154.6 652,152.7 654,154.1 656,153.9 658,151.5 660,154.5 662,153.0 664,152.0 666,153.7 668,152.6 670,154.2 672,152.2 674,154.5 676,153.7 678,154.1 680,152.6 682,153.8 684,152.5 686,152.3 688,153.5 690,154.7 692,152.5 694,151.3 696,154.8 698,152.0 700,151.8 702,151.4 704,151.3 706,151.9 708,151.9 710,153.0 712,154.6 714,153.6 716,152.5 718,152.7 720,152.3 722,154.6 724,154.5 726,152.4 728,152.9 730,151.9 732,153.6 734,151.5 736,154.3 738,154.3 740,152.9 742,153.2 744,151.6 746,154.1 748,153.9 750,153.6 752,151.3 754,154.4 756,152.4 758,153.9 760,152.3 762,151.4 764,151.3 766,152.8 768,154.3 770,151.8 772,154.0 774,152.4 776,152.8 778,152.1 780,154.8 782,151.3 784,153.8 786,153.3 788,153.6 790,153.4 792,154.5 794,153.7 796,153.6 797,162 618,162" fill="#2b566c"/>
<rect x="615" y="161.5" width="182" height="2" fill="#3d4520"/>
<polygon points="207.8,163 208.6,160 209,152 209.4,160 210.2,163" fill="#2c2c2c"/>
<polygon points="264.1,163 265.4,124 266,116 266.6,124 267.9,163" fill="#5e6a20"/>
<polygon points="264.5,163 265.5,140 266,132 266.5,140 267.5,163" fill="#36769a"/>
<polygon points="453.5,163 454.5,146 455,138 455.5,146 456.5,163" fill="#5e6a20"/>
<polygon points="453.8,163 454.6,154 455,146 455.4,154 456.2,163" fill="#36769a"/>
<polygon points="570.5,163 571.5,121 572,113 572.5,121 573.5,163" fill="#5e6a20"/>
<polygon points="571.8,163 572.6,143 573,135 573.4,143 574.2,163" fill="#36769a"/>
<polygon points="608.6,163 610.2,52 611,44 611.8,52 613.4,163" fill="#36769a"/>
<polygon points="610.2,163 611.4,64 612,56 612.6,64 613.8,163" fill="#5e6a20"/>
<polygon points="614.5,163 615.5,123 616,115 616.5,123 617.5,163" fill="#36769a"/>
<polygon points="670.2,163 671.4,88 672,80 672.6,88 673.8,163" fill="#5e6a20"/>
<polygon points="671.8,163 672.6,136 673,128 673.4,136 674.2,163" fill="#36769a"/>
<polygon points="716.2,163 717.4,90 718,82 718.6,90 719.8,163" fill="#5e6a20"/>
<polygon points="717.8,163 718.6,138 719,130 719.4,138 720.2,163" fill="#36769a"/>
<polygon points="760.2,163 761.4,84 762,76 762.6,84 763.8,163" fill="#5e6a20"/>
<polygon points="761.5,163 762.5,136 763,128 763.5,136 764.5,163" fill="#36769a"/>
<polygon points="779.8,163 780.6,120 781,112 781.4,120 782.2,163" fill="#5e6a20"/>
<line x1="259" x2="797" y1="50.5" y2="50.5" stroke="#9a9a9a" stroke-width="1" opacity="0.6"/>
<line x1="259" x2="797" y1="107.5" y2="107.5" stroke="#9a9a9a" stroke-width="1" opacity="0.6"/>
<line x1="259" x2="797" y1="135.5" y2="135.5" stroke="#9a9a9a" stroke-width="1" opacity="0.6"/>
<polyline points="176,283.5 609.5,283.5 609.5,170.5 799,170.5" stroke="#a39428" fill="none" stroke-width="1.3"/>
<line x1="630" x2="799" y1="170.5" y2="170.5" stroke="#7a9a1e" stroke-width="1.3"/>
<line x1="630" x2="799" y1="175.5" y2="175.5" stroke="#3a86a5" stroke-width="1.3"/>
<line x1="630" x2="799" y1="180.5" y2="180.5" stroke="#d07a18" stroke-width="1.3"/>
<line x1="630" x2="799" y1="184.5" y2="184.5" stroke="#6f6418" stroke-width="1.3"/>
<polyline points="176,295.5 799,294.5" stroke="#3a80a0" fill="none" stroke-width="1.3"/>
<polyline points="176,302.5 263,302.5 266,301 298,301 301,302.5 455,302.5 458,301 488,301 491,302.5 570,302.5 590,302 628,301 660,295 673,294 676,292.5 683,292.5 686,293.5 716,292.5 719,291 726,291 729,292.5 760,290.5 763,289.5 770,289.5 773,290.5 799,289.5" stroke="#6f8f1e" fill="none" stroke-width="1.3"/>
<polyline points="176,308.5 799,304.5" stroke="#7a6a1c" fill="none" stroke-width="1.3" opacity="0.9"/>
<polyline points="176,314 263,314 266,309.5 293,309.5 296,314 453,314 456,309.5 486,309.5 489,314 570,314 573,308 596,308 599,314 628,314 632,309 638,309 641,314 672,314 675,309 681,309 684,314 715,314 718,309 725,309 728,314 759,314 762,309 769,309 772,314 799,314" stroke="#c0a020" fill="none" stroke-width="1.3"/>
<polyline points="176,319.5 600,318" stroke="#8e3614" fill="none" stroke-width="1.3"/>
<polyline points="611,336 799,309" stroke="#8e3614" fill="none" stroke-width="1.3"/>
<polyline points="265,343 266,311 292,311 293,343" stroke="#d8841c" fill="none" stroke-width="1.2"/>
<polyline points="454,343 455,311 486,311 487,343" stroke="#d8841c" fill="none" stroke-width="1.2"/>
<polyline points="570,343 571,311 594,311 595,343" stroke="#d8841c" fill="none" stroke-width="1.2"/>
<polyline points="607,343 608,306 616,306 617,343" stroke="#d8841c" fill="none" stroke-width="1.2"/>
<polyline points="633,343 634,302 637,302 638,343" stroke="#d8841c" fill="none" stroke-width="1.2"/>
<polyline points="672,343 673,307 680,307 681,343" stroke="#d8841c" fill="none" stroke-width="1.2"/>
<polyline points="715,343 716,307 724,307 725,343" stroke="#d8841c" fill="none" stroke-width="1.2"/>
<polyline points="759,343 760,303 768,303 769,343" stroke="#d8841c" fill="none" stroke-width="1.2"/>
<polyline points="293,311 295,331 300,331 301,343" stroke="#d8841c" fill="none" stroke-width="1.2"/>
<polyline points="595,311 597,331 601,331 602,343" stroke="#d8841c" fill="none" stroke-width="1.2"/>
<polyline points="609.5,343 609.5,310" stroke="#8a5aa0" fill="none" stroke-width="1.2"/>
<rect x="628" y="44" width="2" height="120" fill="#e6e2d2"/>
<rect x="627" y="44" width="3" height="72" fill="#5ab0e0"/>
<rect x="628" y="44" width="1" height="72" fill="#c8ecff"/>
<rect x="628" y="165" width="2" height="118" fill="#e6e2d2"/>
<rect x="628" y="286" width="2" height="57" fill="#e6e2d2"/>
</g></svg><div class="pill" style="left:6px;top:-1.5px;width:80px;height:11.5px;line-height:12.5px;color:#e4e4e4">66ms (15FPS)</div><div class="pill" style="left:6px;top:55.200000000000045px;width:80px;height:11.199999999999932px;line-height:12.199999999999932px;color:#e4e4e4">33ms (30FPS)</div><div class="pill" style="left:6px;top:84.20000000000005px;width:80px;height:11.199999999999932px;line-height:12.199999999999932px;color:#e4e4e4">16ms (60FPS)</div><div class="pill" style="left:457px;top:-1px;width:68px;height:11px;line-height:12px;color:#56a2d0">100018.7ms</div><div class="pill" style="left:439px;top:120px;width:12.5px;height:10px;line-height:11px;color:#b4bc8c">2</div><div class="pill" style="left:423px;top:131px;width:29px;height:11px;line-height:12px;color:#dcb080">1.7k</div><div class="pill" style="left:456.5px;top:122px;width:13.0px;height:11px;line-height:12px;color:#9cc4dc">2</div><div class="pill" style="left:456.5px;top:134px;width:28.0px;height:11px;line-height:12px;color:#c8c28c">5.0k</div><div class="pill" style="left:403px;top:244px;width:48.5px;height:11px;line-height:12px;color:#b8c490">96.7 MB</div><div class="pill" style="left:423px;top:261px;width:28.5px;height:11px;line-height:12px;color:#d0c48a">3.0k</div><div class="pill" style="left:456px;top:242.5px;width:48px;height:11.0px;line-height:12.0px;color:#a0c8e0">22.9 MB</div><div class="pill" style="left:456px;top:255px;width:19.5px;height:10.5px;line-height:11.5px;color:#d0c48a">27</div><div class="pill" style="left:456px;top:284px;width:41.5px;height:11px;line-height:12px;color:#d8a48c">6.9 MB</div><span class="t sel" style="left:20px;width:600px;text-align:right;top:3.99px;font-size:12px;letter-spacing:0.87px">Selected: EditorApplication.Internal&nbsp;&nbsp;CallUpdateFunctions()</span>
</div>
<div style="left:800px;top:693px;width:15px;height:299px;background:linear-gradient(90deg,#9a9a9a,#c2c2c2 40%,#a8a8a8)"></div>
<svg style="left:802px;top:699px" width="11" height="7"><path d="M5.5 0.5L10 6H1z" fill="#333"/></svg>
<svg style="left:802px;top:980px" width="11" height="7"><path d="M5.5 6.5L10 1H1z" fill="#333"/></svg>
<div style="left:801px;top:783px;width:13px;height:190px;background:linear-gradient(90deg,#a8a8a8,#c4c4c4 45%,#b4b4b4);border-radius:0 0 6px 6px"></div>
<div style="left:801px;top:711px;width:13px;height:72px;background:linear-gradient(90deg,#7e8aa5,#5a6888);border-radius:6px;box-shadow:inset 0 0 0 1px #4a5670"></div>
<div style="left:7px;top:992px;width:808px;height:18px;background:linear-gradient(#cfcfcf,#b1b1b1)"></div>
<div style="left:7px;top:1009px;width:808px;height:1px;background:#5a5a5a"></div>
<div style="left:12px;top:992px;width:1px;height:17px;background:#8e8e8e"></div>
<div style="left:132px;top:992px;width:1px;height:17px;background:#8e8e8e"></div>
<span class="t" style="left:18.3px;top:992.13px;font-size:10px;color:#000;letter-spacing:0.68px;font-weight:normal;-webkit-text-stroke:0.12px #000">Hierarchy</span>
<svg style="left:124px;top:999px" width="6" height="4"><path d="M0 0h5l-2.5 3z" fill="#444"/></svg>
<span class="t" style="left:172.5px;top:992.13px;font-size:10px;color:#000;letter-spacing:1.05px;font-weight:normal;-webkit-text-stroke:0.12px #000">CPU:100076.01ms</span>
<span class="t" style="left:282.5px;top:992.13px;font-size:10px;color:#000;letter-spacing:0.8px;font-weight:normal;-webkit-text-stroke:0.12px #000">GPU:0.00ms</span>
<div style="left:389px;top:994px;width:300px;height:14px;background:linear-gradient(#a9a9a9,#bdbdbd);border-radius:7px;box-shadow:inset 0 0 0 1px #7d7d7d"></div>
<svg style="left:396px;top:996px" width="10" height="10"><circle cx="4" cy="4" r="3" fill="none" stroke="#555" stroke-width="1.2"/><path d="M6 6L9 9" stroke="#555" stroke-width="1.4"/></svg>
<div style="left:689px;top:992px;width:1px;height:17px;background:#8e8e8e"></div>
<div style="left:809px;top:992px;width:1px;height:17px;background:#8e8e8e"></div>
<span class="t" style="left:695px;top:992.13px;font-size:10px;color:#000;letter-spacing:0.6px;font-weight:normal;-webkit-text-stroke:0.12px #000">No Details</span>
<svg style="left:800px;top:999px" width="6" height="4"><path d="M0 0h5l-2.5 3z" fill="#444"/></svg>
<div style="left:7px;top:1010px;width:793px;height:20px;background:#b3b3b3"></div>
<div style="left:638px;top:1010px;width:68px;height:20px;background:#a7b1bd"></div>
<div style="left:7px;top:1030px;width:793px;height:1px;background:#3c3c3c"></div>
<div style="left:361px;top:1010px;width:1px;height:20px;background:#4a4a4a"></div>
<div style="left:430px;top:1010px;width:1px;height:20px;background:#4a4a4a"></div>
<div style="left:499px;top:1010px;width:1px;height:20px;background:#4a4a4a"></div>
<div style="left:568px;top:1010px;width:1px;height:20px;background:#4a4a4a"></div>
<div style="left:638px;top:1010px;width:1px;height:20px;background:#4a4a4a"></div>
<div style="left:706px;top:1010px;width:1px;height:20px;background:#4a4a4a"></div>
<div style="left:776px;top:1010px;width:1px;height:20px;background:#4a4a4a"></div>
<div style="left:799px;top:1010px;width:1px;height:20px;background:#4a4a4a"></div>
<span class="t" style="left:11.5px;top:1011.19px;font-size:11px;color:#000;letter-spacing:1.0px;font-weight:normal;">Overview</span>
<span class="t" style="left:346.8px;width:80px;text-align:right;top:1011.19px;font-size:11px;color:#000;letter-spacing:0.8px;font-weight:normal;">Total</span>
<span class="t" style="left:415.8px;width:80px;text-align:right;top:1011.19px;font-size:11px;color:#000;letter-spacing:0.8px;font-weight:normal;">Self</span>
<span class="t" style="left:484.79999999999995px;width:80px;text-align:right;top:1011.19px;font-size:11px;color:#000;letter-spacing:0.8px;font-weight:normal;">Calls</span>
<span class="t" style="left:554.8px;width:80px;text-align:right;top:1011.19px;font-size:11px;color:#000;letter-spacing:0.8px;font-weight:normal;">GC Alloc</span>
<span class="t" style="left:622.8px;width:80px;text-align:right;top:1011.19px;font-size:11px;color:#000;letter-spacing:0.8px;font-weight:normal;">Time ms</span>
<span class="t" style="left:691.8px;width:80px;text-align:right;top:1011.19px;font-size:11px;color:#000;letter-spacing:0.8px;font-weight:normal;">Self ms</span>
<svg style="left:780px;top:1012px" width="17" height="16"><path d="M8.5 1.5L15.5 14.5H1.5z" fill="#bdbdbd" stroke="#777" stroke-width="1.2" stroke-linejoin="round"/><path d="M8.5 5v5" stroke="#f2f2f2" stroke-width="1.5"/><circle cx="8.5" cy="12" r="0.9" fill="#f2f2f2"/></svg>
<div style="left:800px;top:1010px;width:15px;height:21px;background:#a9a9a9"></div>
<div style="left:7px;top:1031px;width:793px;height:16px;background:#2f62b8"></div>
<div style="left:7px;top:1031px;width:354px;height:16px;overflow:hidden">
<span class="t" style="left:20.5px;top:-1.01px;font-size:11px;color:#e6e6e6;letter-spacing:0.85px">EditorApplication.Internal&nbsp;&nbsp;CallUpdateFunctions()</span>
</div>
<span class="t" style="left:336.85px;width:90px;text-align:right;top:1029.99px;font-size:11px;color:#e6e6e6;letter-spacing:0.85px;font-weight:normal;">99.9%</span>
<span class="t" style="left:405.85px;width:90px;text-align:right;top:1029.99px;font-size:11px;color:#e6e6e6;letter-spacing:0.85px;font-weight:normal;">99.9%</span>
<span class="t" style="left:474.85px;width:90px;text-align:right;top:1029.99px;font-size:11px;color:#e6e6e6;letter-spacing:0.85px;font-weight:normal;">1</span>
<span class="t" style="left:544.85px;width:90px;text-align:right;top:1029.99px;font-size:11px;color:#e6e6e6;letter-spacing:0.85px;font-weight:normal;">306.7 KB</span>
<span class="t" style="left:612.85px;width:90px;text-align:right;top:1029.99px;font-size:11px;color:#e6e6e6;letter-spacing:0.85px;font-weight:normal;">100018.71</span>
<span class="t" style="left:681.85px;width:90px;text-align:right;top:1029.99px;font-size:11px;color:#e6e6e6;letter-spacing:0.85px;font-weight:normal;">100018.71</span>
<div style="left:7px;top:1047px;width:793px;height:16px;background:#b4b4b4"></div>
<svg style="left:16px;top:1050.5px" width="9" height="10"><path d="M0 0.5v9l8-4.5z" fill="#707070"/></svg>
<div style="left:7px;top:1047px;width:354px;height:16px;overflow:hidden">
<span class="t" style="left:22px;top:-1.01px;font-size:11px;color:#000;letter-spacing:0.85px">UpdateSceneIfNeeded</span>
</div>
<span class="t" style="left:336.85px;width:90px;text-align:right;top:1045.99px;font-size:11px;color:#000;letter-spacing:0.85px;font-weight:normal;">0.0%</span>
<span class="t" style="left:405.85px;width:90px;text-align:right;top:1045.99px;font-size:11px;color:#000;letter-spacing:0.85px;font-weight:normal;">0.0%</span>
<span class="t" style="left:474.85px;width:90px;text-align:right;top:1045.99px;font-size:11px;color:#000;letter-spacing:0.85px;font-weight:normal;">1</span>
<span class="t" style="left:544.85px;width:90px;text-align:right;top:1045.99px;font-size:11px;color:#000;letter-spacing:0.85px;font-weight:normal;">21.1 KB</span>
<span class="t" style="left:612.85px;width:90px;text-align:right;top:1045.99px;font-size:11px;color:#000;letter-spacing:0.85px;font-weight:normal;">32.57</span>
<span class="t" style="left:681.85px;width:90px;text-align:right;top:1045.99px;font-size:11px;color:#000;letter-spacing:0.85px;font-weight:normal;">0.17</span>
<div style="left:7px;top:1063px;width:793px;height:16px;background:#aeaeae"></div>
<svg style="left:16px;top:1066.5px" width="9" height="10"><path d="M0 0.5v9l8-4.5z" fill="#707070"/></svg>
<div style="left:7px;top:1063px;width:354px;height:16px;overflow:hidden">
<span class="t" style="left:22px;top:-1.01px;font-size:11px;color:#000;letter-spacing:0.85px">GUIUtility.ProcessEvent()</span>
</div>
<span class="t" style="left:336.85px;width:90px;text-align:right;top:1061.99px;font-size:11px;color:#000;letter-spacing:0.85px;font-weight:normal;">0.0%</span>
<span class="t" style="left:405.85px;width:90px;text-align:right;top:1061.99px;font-size:11px;color:#000;letter-spacing:0.85px;font-weight:normal;">0.0%</span>
<span class="t" style="left:474.85px;width:90px;text-align:right;top:1061.99px;font-size:11px;color:#000;letter-spacing:0.85px;font-weight:normal;">2</span>
<span class="t" style="left:544.85px;width:90px;text-align:right;top:1061.99px;font-size:11px;color:#000;letter-spacing:0.85px;font-weight:normal;">52.8 KB</span>
<span class="t" style="left:612.85px;width:90px;text-align:right;top:1061.99px;font-size:11px;color:#000;letter-spacing:0.85px;font-weight:normal;">17.84</span>
<span class="t" style="left:681.85px;width:90px;text-align:right;top:1061.99px;font-size:11px;color:#000;letter-spacing:0.85px;font-weight:normal;">8.63</span>
<div style="left:7px;top:1079px;width:793px;height:16px;background:#b4b4b4"></div>
<div style="left:7px;top:1079px;width:354px;height:16px;overflow:hidden">
<span class="t" style="left:20.5px;top:-1.01px;font-size:11px;color:#000;letter-spacing:0.85px">Unaccounted time between: UpdateSceneIfNeeded and Ho</span>
</div>
<span class="t" style="left:336.85px;width:90px;text-align:right;top:1077.99px;font-size:11px;color:#000;letter-spacing:0.85px;font-weight:normal;">0.0%</span>
<span class="t" style="left:405.85px;width:90px;text-align:right;top:1077.99px;font-size:11px;color:#000;letter-spacing:0.85px;font-weight:normal;">0.0%</span>
<span class="t" style="left:474.85px;width:90px;text-align:right;top:1077.99px;font-size:11px;color:#000;letter-spacing:0.85px;font-weight:normal;">1</span>
<span class="t" style="left:544.85px;width:90px;text-align:right;top:1077.99px;font-size:11px;color:#000;letter-spacing:0.85px;font-weight:normal;">0 B</span>
<span class="t" style="left:612.85px;width:90px;text-align:right;top:1077.99px;font-size:11px;color:#000;letter-spacing:0.85px;font-weight:normal;">2.70</span>
<span class="t" style="left:681.85px;width:90px;text-align:right;top:1077.99px;font-size:11px;color:#000;letter-spacing:0.85px;font-weight:normal;">2.70</span>
<div style="left:7px;top:1095px;width:793px;height:16px;background:#aeaeae"></div>
<div style="left:7px;top:1095px;width:354px;height:16px;overflow:hidden">
<span class="t" style="left:20.5px;top:-1.01px;font-size:11px;color:#000;letter-spacing:0.85px">Overhead</span>
</div>
<span class="t" style="left:336.85px;width:90px;text-align:right;top:1093.99px;font-size:11px;color:#000;letter-spacing:0.85px;font-weight:normal;">0.0%</span>
<span class="t" style="left:405.85px;width:90px;text-align:right;top:1093.99px;font-size:11px;color:#000;letter-spacing:0.85px;font-weight:normal;">0.0%</span>
<span class="t" style="left:474.85px;width:90px;text-align:right;top:1093.99px;font-size:11px;color:#000;letter-spacing:0.85px;font-weight:normal;">1</span>
<span class="t" style="left:544.85px;width:90px;text-align:right;top:1093.99px;font-size:11px;color:#000;letter-spacing:0.85px;font-weight:normal;">0 B</span>
<span class="t" style="left:612.85px;width:90px;text-align:right;top:1093.99px;font-size:11px;color:#000;letter-spacing:0.85px;font-weight:normal;">1.39</span>
<span class="t" style="left:681.85px;width:90px;text-align:right;top:1093.99px;font-size:11px;color:#000;letter-spacing:0.85px;font-weight:normal;">1.39</span>
<div style="left:7px;top:1111px;width:793px;height:16px;background:#b4b4b4"></div>
<div style="left:7px;top:1111px;width:354px;height:16px;overflow:hidden">
<span class="t" style="left:20.5px;top:-1.01px;font-size:11px;color:#000;letter-spacing:0.85px">Unaccounted time between: HandleUtility.SetViewInfo() an</span>
</div>
<span class="t" style="left:336.85px;width:90px;text-align:right;top:1109.99px;font-size:11px;color:#000;letter-spacing:0.85px;font-weight:normal;">0.0%</span>
<span class="t" style="left:405.85px;width:90px;text-align:right;top:1109.99px;font-size:11px;color:#000;letter-spacing:0.85px;font-weight:normal;">0.0%</span>
<span class="t" style="left:474.85px;width:90px;text-align:right;top:1109.99px;font-size:11px;color:#000;letter-spacing:0.85px;font-weight:normal;">1</span>
<span class="t" style="left:544.85px;width:90px;text-align:right;top:1109.99px;font-size:11px;color:#000;letter-spacing:0.85px;font-weight:normal;">0 B</span>
<span class="t" style="left:612.85px;width:90px;text-align:right;top:1109.99px;font-size:11px;color:#000;letter-spacing:0.85px;font-weight:normal;">1.21</span>
<span class="t" style="left:681.85px;width:90px;text-align:right;top:1109.99px;font-size:11px;color:#000;letter-spacing:0.85px;font-weight:normal;">1.21</span>
<div style="left:7px;top:1127px;width:793px;height:16px;background:#aeaeae"></div>
<div style="left:7px;top:1127px;width:354px;height:16px;overflow:hidden">
<span class="t" style="left:20.5px;top:-1.01px;font-size:11px;color:#000;letter-spacing:0.85px">JSProxyMgr.DoTasks()</span>
</div>
<span class="t" style="left:336.85px;width:90px;text-align:right;top:1125.99px;font-size:11px;color:#000;letter-spacing:0.85px;font-weight:normal;">0.0%</span>
<span class="t" style="left:405.85px;width:90px;text-align:right;top:1125.99px;font-size:11px;color:#000;letter-spacing:0.85px;font-weight:normal;">0.0%</span>
<span class="t" style="left:474.85px;width:90px;text-align:right;top:1125.99px;font-size:11px;color:#000;letter-spacing:0.85px;font-weight:normal;">1</span>
<span class="t" style="left:544.85px;width:90px;text-align:right;top:1125.99px;font-size:11px;color:#000;letter-spacing:0.85px;font-weight:normal;">22.6 KB</span>
<span class="t" style="left:612.85px;width:90px;text-align:right;top:1125.99px;font-size:11px;color:#000;letter-spacing:0.85px;font-weight:normal;">0.86</span>
<span class="t" style="left:681.85px;width:90px;text-align:right;top:1125.99px;font-size:11px;color:#000;letter-spacing:0.85px;font-weight:normal;">0.86</span>
<div style="left:7px;top:1143px;width:793px;height:16px;background:#b4b4b4"></div>
<div style="left:7px;top:1143px;width:354px;height:16px;overflow:hidden">
<span class="t" style="left:20.5px;top:-1.01px;font-size:11px;color:#000;letter-spacing:0.85px">HostView.OnInspectorUpdate()</span>
</div>
<span class="t" style="left:336.85px;width:90px;text-align:right;top:1141.99px;font-size:11px;color:#000;letter-spacing:0.85px;font-weight:normal;">0.0%</span>
<span class="t" style="left:405.85px;width:90px;text-align:right;top:1141.99px;font-size:11px;color:#000;letter-spacing:0.85px;font-weight:normal;">0.0%</span>
<span class="t" style="left:474.85px;width:90px;text-align:right;top:1141.99px;font-size:11px;color:#000;letter-spacing:0.85px;font-weight:normal;">6</span>
<span class="t" style="left:544.85px;width:90px;text-align:right;top:1141.99px;font-size:11px;color:#000;letter-spacing:0.85px;font-weight:normal;">1.1 KB</span>
<span class="t" style="left:612.85px;width:90px;text-align:right;top:1141.99px;font-size:11px;color:#000;letter-spacing:0.85px;font-weight:normal;">0.25</span>
<span class="t" style="left:681.85px;width:90px;text-align:right;top:1141.99px;font-size:11px;color:#000;letter-spacing:0.85px;font-weight:normal;">0.25</span>
<div style="left:7px;top:1159px;width:793px;height:16px;background:#aeaeae"></div>
<svg style="left:16px;top:1162.5px" width="9" height="10"><path d="M0 0.5v9l8-4.5z" fill="#707070"/></svg>
<div style="left:7px;top:1159px;width:354px;height:16px;overflow:hidden">
<span class="t" style="left:22px;top:-1.01px;font-size:11px;color:#000;letter-spacing:0.85px">tickGIInEditor.UpdateSceneStatic()</span>
</div>
<span class="t" style="left:336.85px;width:90px;text-align:right;top:1157.99px;font-size:11px;color:#000;letter-spacing:0.85px;font-weight:normal;">0.0%</span>
<span class="t" style="left:405.85px;width:90px;text-align:right;top:1157.99px;font-size:11px;color:#000;letter-spacing:0.85px;font-weight:normal;">0.0%</span>
<span class="t" style="left:474.85px;width:90px;text-align:right;top:1157.99px;font-size:11px;color:#000;letter-spacing:0.85px;font-weight:normal;">1</span>
<span class="t" style="left:544.85px;width:90px;text-align:right;top:1157.99px;font-size:11px;color:#000;letter-spacing:0.85px;font-weight:normal;">0 B</span>
<span class="t" style="left:612.85px;width:90px;text-align:right;top:1157.99px;font-size:11px;color:#000;letter-spacing:0.85px;font-weight:normal;">0.09</span>
<span class="t" style="left:681.85px;width:90px;text-align:right;top:1157.99px;font-size:11px;color:#000;letter-spacing:0.85px;font-weight:normal;">0.00</span>
<div style="left:7px;top:1175px;width:793px;height:16px;background:#b4b4b4"></div>
<div style="left:7px;top:1175px;width:354px;height:16px;overflow:hidden">
<span class="t" style="left:20.5px;top:-1.01px;font-size:11px;color:#000;letter-spacing:0.85px">RetainedMode.UpdateSchedulers()</span>
</div>
<span class="t" style="left:336.85px;width:90px;text-align:right;top:1173.99px;font-size:11px;color:#000;letter-spacing:0.85px;font-weight:normal;">0.0%</span>
<span class="t" style="left:405.85px;width:90px;text-align:right;top:1173.99px;font-size:11px;color:#000;letter-spacing:0.85px;font-weight:normal;">0.0%</span>
<span class="t" style="left:474.85px;width:90px;text-align:right;top:1173.99px;font-size:11px;color:#000;letter-spacing:0.85px;font-weight:normal;">1</span>
<span class="t" style="left:544.85px;width:90px;text-align:right;top:1173.99px;font-size:11px;color:#000;letter-spacing:0.85px;font-weight:normal;">3.7 KB</span>
<span class="t" style="left:612.85px;width:90px;text-align:right;top:1173.99px;font-size:11px;color:#000;letter-spacing:0.85px;font-weight:normal;">0.08</span>
<span class="t" style="left:681.85px;width:90px;text-align:right;top:1173.99px;font-size:11px;color:#000;letter-spacing:0.85px;font-weight:normal;">0.08</span>
<div style="left:7px;top:1191px;width:793px;height:16px;background:#aeaeae"></div>
<div style="left:7px;top:1191px;width:354px;height:16px;overflow:hidden">
<span class="t" style="left:20.5px;top:-1.01px;font-size:11px;color:#000;letter-spacing:0.85px">AppStatusBar.OnInspectorUpdate()</span>
</div>
<span class="t" style="left:336.85px;width:90px;text-align:right;top:1189.99px;font-size:11px;color:#000;letter-spacing:0.85px;font-weight:normal;">0.0%</span>
<span class="t" style="left:405.85px;width:90px;text-align:right;top:1189.99px;font-size:11px;color:#000;letter-spacing:0.85px;font-weight:normal;">0.0%</span>
<span class="t" style="left:474.85px;width:90px;text-align:right;top:1189.99px;font-size:11px;color:#000;letter-spacing:0.85px;font-weight:normal;">1</span>
<span class="t" style="left:544.85px;width:90px;text-align:right;top:1189.99px;font-size:11px;color:#000;letter-spacing:0.85px;font-weight:normal;">90 B</span>
<span class="t" style="left:612.85px;width:90px;text-align:right;top:1189.99px;font-size:11px;color:#000;letter-spacing:0.85px;font-weight:normal;">0.06</span>
<span class="t" style="left:681.85px;width:90px;text-align:right;top:1189.99px;font-size:11px;color:#000;letter-spacing:0.85px;font-weight:normal;">0.06</span>
<div style="left:7px;top:1207px;width:793px;height:16px;background:#b4b4b4"></div>
<div style="left:7px;top:1207px;width:354px;height:16px;overflow:hidden">
<span class="t" style="left:20.5px;top:-1.01px;font-size:11px;color:#000;letter-spacing:0.85px">HostView.OnFocus()</span>
</div>
<span class="t" style="left:336.85px;width:90px;text-align:right;top:1205.99px;font-size:11px;color:#000;letter-spacing:0.85px;font-weight:normal;">0.0%</span>
<span class="t" style="left:405.85px;width:90px;text-align:right;top:1205.99px;font-size:11px;color:#000;letter-spacing:0.85px;font-weight:normal;">0.0%</span>
<span class="t" style="left:474.85px;width:90px;text-align:right;top:1205.99px;font-size:11px;color:#000;letter-spacing:0.85px;font-weight:normal;">1</span>
<span class="t" style="left:544.85px;width:90px;text-align:right;top:1205.99px;font-size:11px;color:#000;letter-spacing:0.85px;font-weight:normal;">65 B</span>
<span class="t" style="left:612.85px;width:90px;text-align:right;top:1205.99px;font-size:11px;color:#000;letter-spacing:0.85px;font-weight:normal;">0.04</span>
<span class="t" style="left:681.85px;width:90px;text-align:right;top:1205.99px;font-size:11px;color:#000;letter-spacing:0.85px;font-weight:normal;">0.04</span>
<div style="left:7px;top:1223px;width:793px;height:16px;background:#aeaeae"></div>
<div style="left:7px;top:1223px;width:354px;height:16px;overflow:hidden">
<span class="t" style="left:20.5px;top:-1.01px;font-size:11px;color:#000;letter-spacing:0.85px">Profiler.FinalizeAndSendFrame</span>
</div>
<span class="t" style="left:336.85px;width:90px;text-align:right;top:1221.99px;font-size:11px;color:#000;letter-spacing:0.85px;font-weight:normal;">0.0%</span>
<span class="t" style="left:405.85px;width:90px;text-align:right;top:1221.99px;font-size:11px;color:#000;letter-spacing:0.85px;font-weight:normal;">0.0%</span>
<span class="t" style="left:474.85px;width:90px;text-align:right;top:1221.99px;font-size:11px;color:#000;letter-spacing:0.85px;font-weight:normal;">1</span>
<span class="t" style="left:544.85px;width:90px;text-align:right;top:1221.99px;font-size:11px;color:#000;letter-spacing:0.85px;font-weight:normal;">0 B</span>
<span class="t" style="left:612.85px;width:90px;text-align:right;top:1221.99px;font-size:11px;color:#000;letter-spacing:0.85px;font-weight:normal;">0.04</span>
<span class="t" style="left:681.85px;width:90px;text-align:right;top:1221.99px;font-size:11px;color:#000;letter-spacing:0.85px;font-weight:normal;">0.04</span>
<div style="left:7px;top:1239px;width:793px;height:16px;background:#b4b4b4"></div>
<svg style="left:16px;top:1242.5px" width="9" height="10"><path d="M0 0.5v9l8-4.5z" fill="#707070"/></svg>
<div style="left:7px;top:1239px;width:354px;height:16px;overflow:hidden">
<span class="t" style="left:22px;top:-1.01px;font-size:11px;color:#000;letter-spacing:0.85px">editorAfterUpdate.{ InputUpdate(kInputUpdateEditorEnd);</span>
</div>
<span class="t" style="left:336.85px;width:90px;text-align:right;top:1237.99px;font-size:11px;color:#000;letter-spacing:0.85px;font-weight:normal;">0.0%</span>
<span class="t" style="left:405.85px;width:90px;text-align:right;top:1237.99px;font-size:11px;color:#000;letter-spacing:0.85px;font-weight:normal;">0.0%</span>
<span class="t" style="left:474.85px;width:90px;text-align:right;top:1237.99px;font-size:11px;color:#000;letter-spacing:0.85px;font-weight:normal;">1</span>
<span class="t" style="left:544.85px;width:90px;text-align:right;top:1237.99px;font-size:11px;color:#000;letter-spacing:0.85px;font-weight:normal;">0 B</span>
<span class="t" style="left:612.85px;width:90px;text-align:right;top:1237.99px;font-size:11px;color:#000;letter-spacing:0.85px;font-weight:normal;">0.03</span>
<span class="t" style="left:681.85px;width:90px;text-align:right;top:1237.99px;font-size:11px;color:#000;letter-spacing:0.85px;font-weight:normal;">0.02</span>
<div style="left:7px;top:1255px;width:793px;height:16px;background:#aeaeae"></div>
<svg style="left:16px;top:1258.5px" width="9" height="10"><path d="M0 0.5v9l8-4.5z" fill="#707070"/></svg>
<div style="left:7px;top:1255px;width:354px;height:16px;overflow:hidden">
<span class="t" style="left:22px;top:-1.01px;font-size:11px;color:#000;letter-spacing:0.85px">editorBeforeUpdate.{ InputUpdate(kInputUpdateEditorBeg</span>
</div>
<span class="t" style="left:336.85px;width:90px;text-align:right;top:1253.99px;font-size:11px;color:#000;letter-spacing:0.85px;font-weight:normal;">0.0%</span>
<span class="t" style="left:405.85px;width:90px;text-align:right;top:1253.99px;font-size:11px;color:#000;letter-spacing:0.85px;font-weight:normal;">0.0%</span>
<span class="t" style="left:474.85px;width:90px;text-align:right;top:1253.99px;font-size:11px;color:#000;letter-spacing:0.85px;font-weight:normal;">1</span>
<span class="t" style="left:544.85px;width:90px;text-align:right;top:1253.99px;font-size:11px;color:#000;letter-spacing:0.85px;font-weight:normal;">0 B</span>
<span class="t" style="left:612.85px;width:90px;text-align:right;top:1253.99px;font-size:11px;color:#000;letter-spacing:0.85px;font-weight:normal;">0.02</span>
<span class="t" style="left:681.85px;width:90px;text-align:right;top:1253.99px;font-size:11px;color:#000;letter-spacing:0.85px;font-weight:normal;">0.01</span>
<div style="left:7px;top:1271px;width:793px;height:16px;background:#b4b4b4"></div>
<div style="left:7px;top:1271px;width:354px;height:16px;overflow:hidden">
<span class="t" style="left:20.5px;top:-1.01px;font-size:11px;color:#000;letter-spacing:0.85px">EditorCompilationInterface.IsCompiling()</span>
</div>
<span class="t" style="left:336.85px;width:90px;text-align:right;top:1269.99px;font-size:11px;color:#000;letter-spacing:0.85px;font-weight:normal;">0.0%</span>
<span class="t" style="left:405.85px;width:90px;text-align:right;top:1269.99px;font-size:11px;color:#000;letter-spacing:0.85px;font-weight:normal;">0.0%</span>
<span class="t" style="left:474.85px;width:90px;text-align:right;top:1269.99px;font-size:11px;color:#000;letter-spacing:0.85px;font-weight:normal;">2</span>
<span class="t" style="left:544.85px;width:90px;text-align:right;top:1269.99px;font-size:11px;color:#000;letter-spacing:0.85px;font-weight:normal;">34 B</span>
<span class="t" style="left:612.85px;width:90px;text-align:right;top:1269.99px;font-size:11px;color:#000;letter-spacing:0.85px;font-weight:normal;">0.02</span>
<span class="t" style="left:681.85px;width:90px;text-align:right;top:1269.99px;font-size:11px;color:#000;letter-spacing:0.85px;font-weight:normal;">0.02</span>
<div style="left:15px;top:1045.5px;width:774px;height:4.5px;background:#ff0000"></div>
<div style="left:7px;top:1287px;width:793px;height:3px;background:#b5b5b5"></div>
<div style="left:7px;top:1289px;width:808px;height:1px;background:#c4c4bc"></div>
<div style="left:800px;top:1031px;width:15px;height:259px;background:linear-gradient(90deg,#929292,#c0c0c0 45%,#a6a6a6)"></div>
<svg style="left:802px;top:1036px" width="11" height="7"><path d="M5.5 0.5L10 6H1z" fill="#222"/></svg>
<svg style="left:802px;top:1279px" width="11" height="7"><path d="M5.5 6.5L10 1H1z" fill="#222"/></svg>
<div style="left:801px;top:1049px;width:13px;height:32px;background:linear-gradient(90deg,#7e8aa5,#56637f);border-radius:6px;box-shadow:inset 0 0 0 1px #45506a"></div>
<div style="left:801px;top:1081px;width:13px;height:192px;background:linear-gradient(90deg,#a8a8a8,#c4c4c4 45%,#b4b4b4);border-radius:0 0 6px 6px"></div>
</div></body></html>
